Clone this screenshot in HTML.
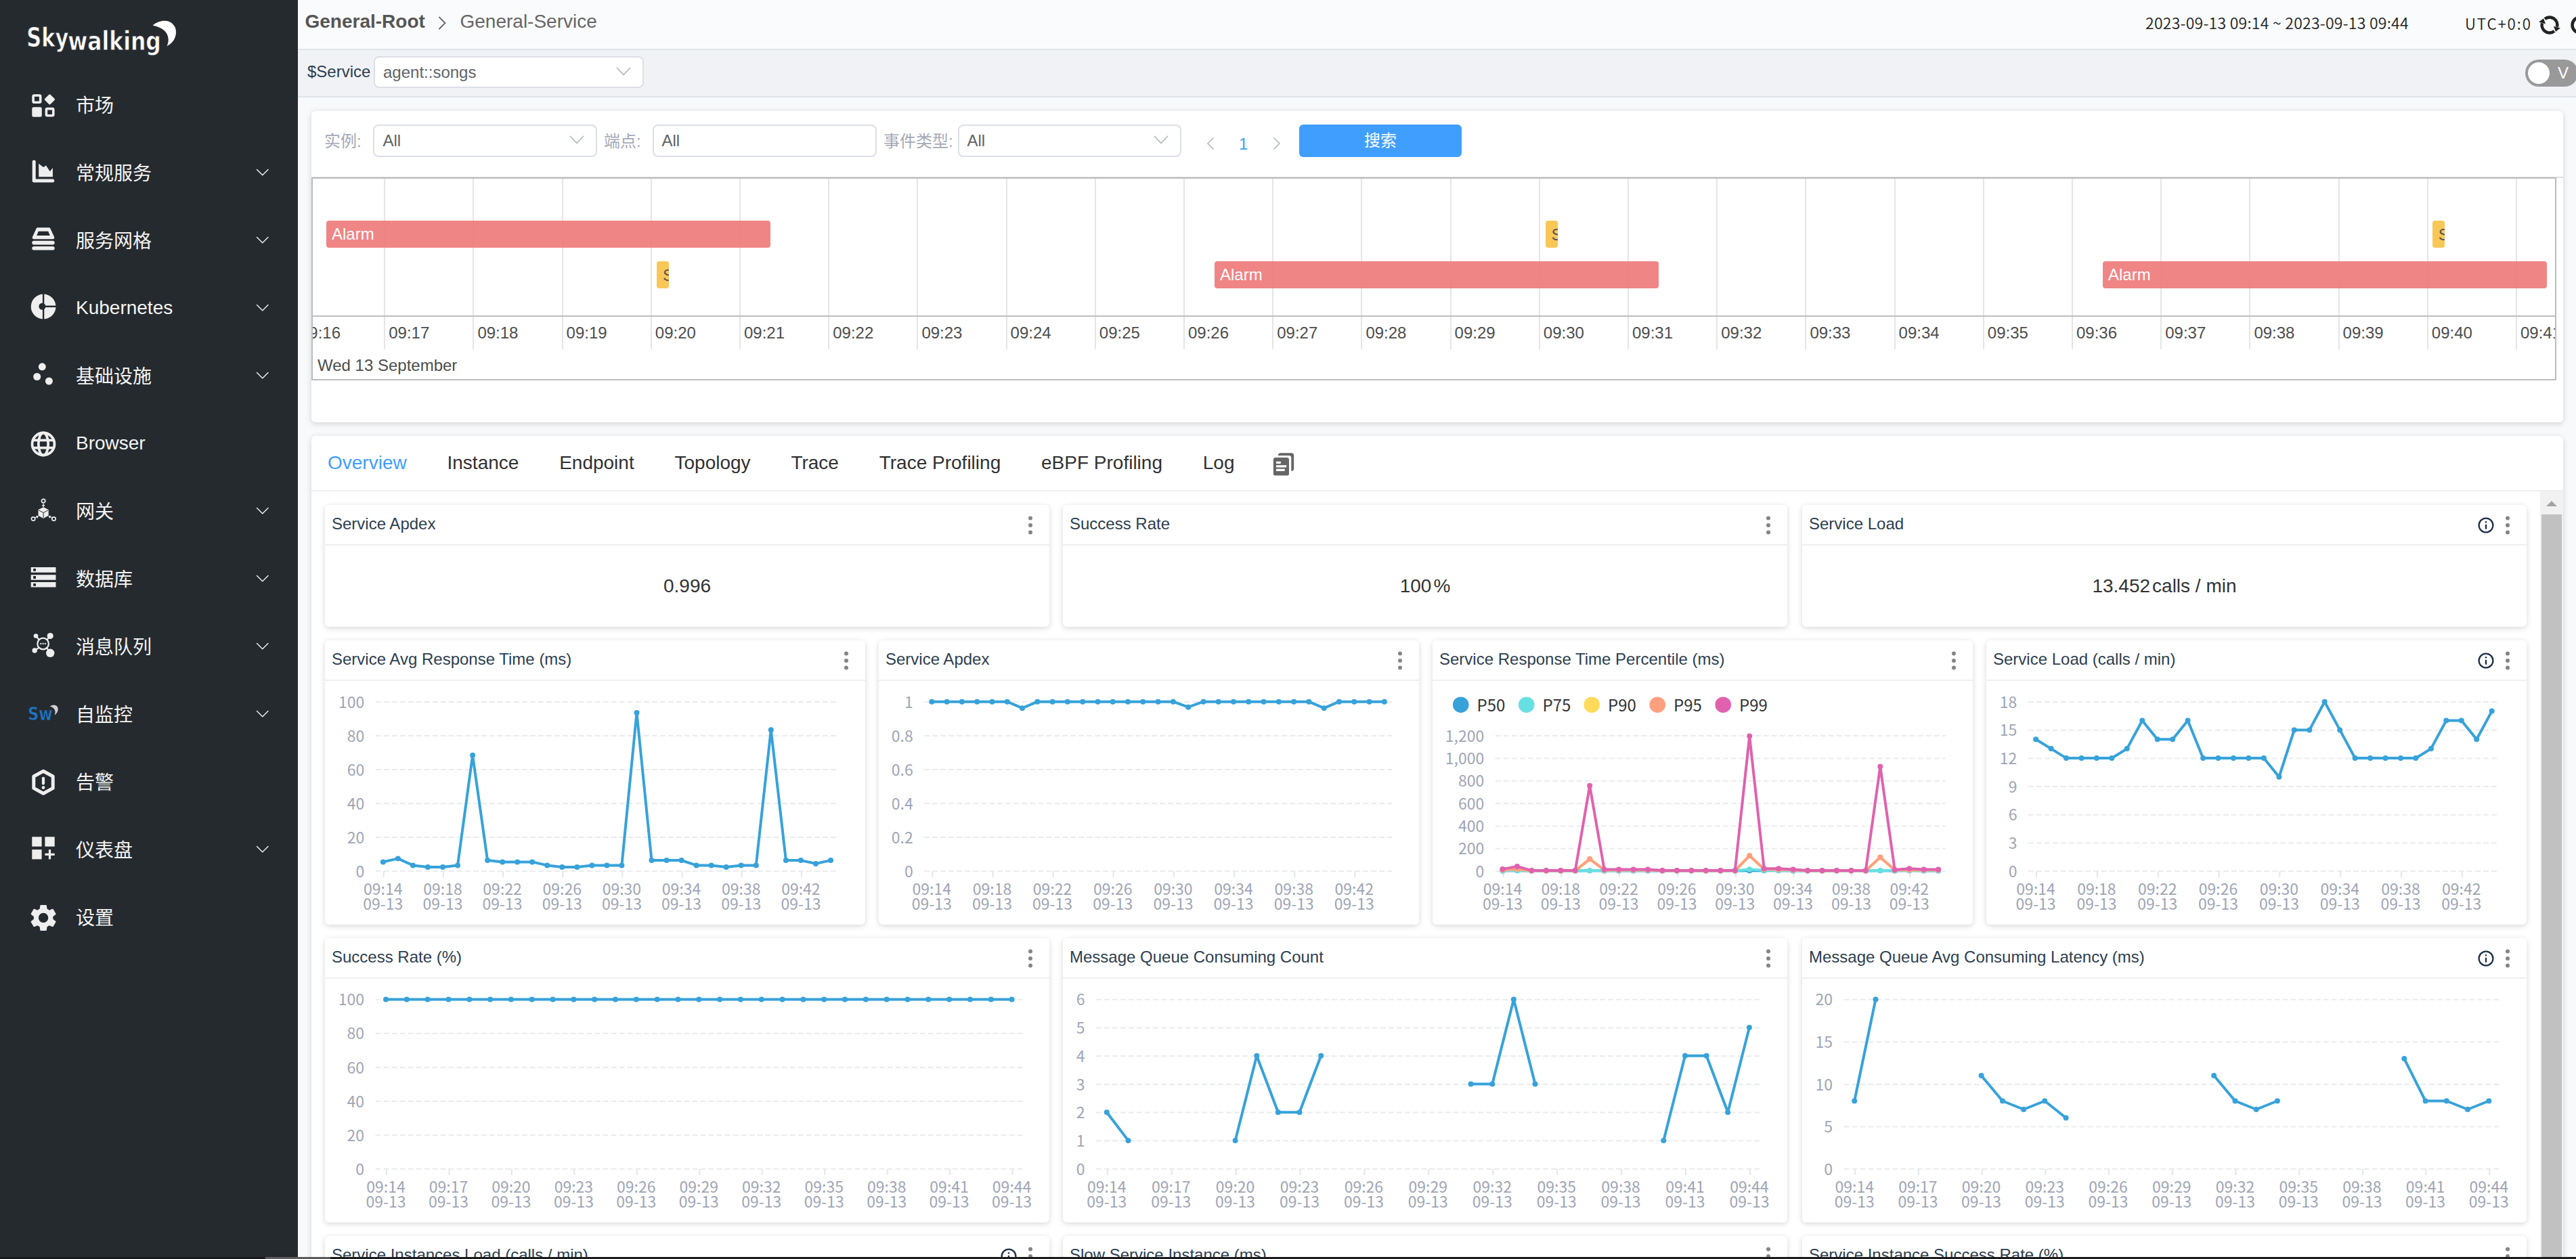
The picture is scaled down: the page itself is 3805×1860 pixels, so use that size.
<!DOCTYPE html><html lang="zh"><head><meta charset="utf-8"><title>SkyWalking</title><style>
*{box-sizing:border-box;margin:0;padding:0}
html,body{width:3805px;height:1860px;overflow:hidden;background:#f7f9fa}
body{font-family:"Liberation Sans","Noto Sans CJK SC",sans-serif;color:#2c3e50;position:relative;-webkit-font-smoothing:antialiased}
.abs{position:absolute}
#side{position:absolute;left:0;top:0;width:440px;height:1860px;background:#252a2f}
.mi{position:absolute;left:0;width:440px;height:100px}
.mi .ic{position:absolute;left:40px;top:26px;width:48px;height:48px}
.mi .tx{position:absolute;left:112px;top:2px;height:100px;line-height:100px;font-size:28px;color:#f4f4f4;white-space:nowrap}
.mi .ar{position:absolute;left:376px;top:38px;width:24px;height:24px}
#top{position:absolute;left:440px;top:0;width:3365px;height:74px;background:#fafbfc;border-bottom:2px solid #dfe4e8}
#tool{position:absolute;left:440px;top:74px;width:3365px;height:70px;background:#f0f2f5;border-bottom:2px solid #dfe4e8}
.card{position:absolute;background:#fff;border-radius:6px;box-shadow:0 2px 8px 0 rgba(0,0,0,.16)}
.sel{position:absolute;height:48px;background:#fff;border:2px solid #dcdfe6;border-radius:8px;font-size:24px;line-height:44px;color:#606266;padding-left:11.5px;white-space:nowrap}
.lab{position:absolute;font-size:24px;line-height:48px;color:#a4a9b6;white-space:nowrap}
.w{position:absolute;background:#fff;border-radius:6px;box-shadow:0 2px 8px 0 rgba(0,0,0,.16);overflow:hidden}
.w .hd{position:absolute;left:0;top:0;right:0;height:60px;border-bottom:2px solid #eee}
.w .tt{position:absolute;left:10px;top:0;line-height:56px;font-size:24px;color:#2c3e50;white-space:nowrap}
.w .val{position:absolute;left:0;right:0;top:60px;bottom:0;display:flex;align-items:center;justify-content:center;font-size:28px;color:#333;white-space:nowrap}
.w svg.ch{position:absolute;left:0;top:0}
.tab{display:inline-block;font-size:28px;margin-right:59.8px;color:#303133;white-space:nowrap}
</style></head><body>
<div id="side">
<svg class="abs" style="left:0;top:0" width="440" height="105" viewBox="0 0 440 105">
<g fill="#fff" stroke="#252a2f" stroke-width="0.800" font-family="DejaVu Sans, sans-serif" font-weight="bold">
<text x="39.300" y="68.600" font-size="38.300" textLength="62" lengthAdjust="spacingAndGlyphs">Sky</text>
<text x="100.300" y="74.100" font-size="39.300" textLength="137.500" lengthAdjust="spacingAndGlyphs">walking</text></g>
<path d="M225.500 37.500 C236 29 252 27.500 258.500 40 C263 51 257 63 246.500 68.300 C252 56 248 42 225.500 37.500 Z" fill="#fff"/>
</svg>
<div class="mi" style="top:105px"><div class="ic"><svg viewBox="0 0 48 48" width="48" height="48"><g fill="none" stroke="#eeeeee" stroke-width="3.600"><rect x="9.100" y="10" width="10.600" height="10.200" rx="1.500"/><rect x="28.400" y="29.600" width="10.400" height="10.200" rx="1.500"/></g><rect x="7.300" y="27.300" width="14.500" height="14.500" rx="2.500" fill="#eeeeee"/><rect x="27.600" y="10.100" width="11.600" height="11.600" rx="1.500" transform="rotate(45 33.400 15.900)" fill="#eeeeee"/></svg></div><div class="tx">市场</div></div>
<div class="mi" style="top:205px"><div class="ic"><svg viewBox="0 0 48 48" width="48" height="48"><path d="M10.200 8 V35.900 H37.700" fill="none" stroke="#eeeeee" stroke-width="5" stroke-linecap="round" stroke-linejoin="round"/><path d="M17.200 10.800 L24.100 15.900 L28 13.600 L33.800 22.300 L37.900 17 V30.200 H17.200 Z" fill="#eeeeee"/></svg></div><div class="tx">常规服务</div><svg class="abs" style="left:378.25px;top:43.9px" width="19.5" height="11.2" viewBox="0 0 19.5 11.2"><path d="M1.5 1.5 L9.75 9.7 L18 1.5" fill="none" stroke="#ececec" stroke-width="1.5" stroke-linecap="round" stroke-linejoin="round"/></svg></div>
<div class="mi" style="top:305px"><div class="ic"><svg viewBox="0 0 48 48" width="48" height="48"><g fill="#eeeeee"><path d="M15.500 5.300 h17 a2 2 0 0 1 1.800 1.200 l5.800 12.500 a2.300 2.300 0 0 1 -2.100 3.300 h-28 a2.300 2.300 0 0 1 -2.100 -3.300 l5.800 -12.500 a2 2 0 0 1 1.800 -1.200 z M16.800 10.800 l-2.600 6.200 h19.600 l-2.600 -6.200 z" fill-rule="evenodd"/><rect x="7.300" y="24.700" width="33.400" height="5.700" rx="2.850"/><rect x="7.300" y="32.900" width="33.400" height="5.600" rx="2.800"/></g></svg></div><div class="tx">服务网格</div><svg class="abs" style="left:378.25px;top:43.9px" width="19.5" height="11.2" viewBox="0 0 19.5 11.2"><path d="M1.5 1.5 L9.75 9.7 L18 1.5" fill="none" stroke="#ececec" stroke-width="1.5" stroke-linecap="round" stroke-linejoin="round"/></svg></div>
<div class="mi" style="top:405px"><div class="ic"><svg viewBox="0 0 48 48" width="48" height="48"><circle cx="24.100" cy="22" r="18.400" fill="#eeeeee"/><g stroke="#252a2f" stroke-width="2.400" fill="none"><path d="M24.100 2 V42 M24.100 21.700 H44"/></g><circle cx="22.400" cy="21.700" r="5" fill="#252a2f"/><rect x="23" y="20.300" width="5" height="2.800" fill="#eeeeee" opacity="0"/></svg></div><div class="tx" style="top:0">Kubernetes</div><svg class="abs" style="left:378.25px;top:43.9px" width="19.5" height="11.2" viewBox="0 0 19.5 11.2"><path d="M1.5 1.5 L9.75 9.7 L18 1.5" fill="none" stroke="#ececec" stroke-width="1.5" stroke-linecap="round" stroke-linejoin="round"/></svg></div>
<div class="mi" style="top:505px"><div class="ic"><svg viewBox="0 0 48 48" width="48" height="48"><g fill="#eeeeee"><circle cx="22.300" cy="10.800" r="5.500"/><circle cx="14.700" cy="25.500" r="5.500"/><circle cx="32.400" cy="32" r="5.500"/></g></svg></div><div class="tx">基础设施</div><svg class="abs" style="left:378.25px;top:43.9px" width="19.5" height="11.2" viewBox="0 0 19.5 11.2"><path d="M1.5 1.5 L9.75 9.7 L18 1.5" fill="none" stroke="#ececec" stroke-width="1.5" stroke-linecap="round" stroke-linejoin="round"/></svg></div>
<div class="mi" style="top:605px"><div class="ic"><svg viewBox="0 0 48 48" width="48" height="48"><g fill="none" stroke="#eeeeee" stroke-width="3.800"><circle cx="24" cy="25" r="16.500"/><ellipse cx="24" cy="25" rx="7.200" ry="16.500"/><path d="M9 19.300 H39 M9 30.700 H39"/></g></svg></div><div class="tx" style="top:0">Browser</div></div>
<div class="mi" style="top:705px"><div class="ic"><svg viewBox="0 0 48 48" width="48" height="48"><path d="M24.100 18.300 l7.600 3.800 v8.600 l-7.600 4.300 -7.600 -4.300 v-8.600 z" fill="#eeeeee"/><path d="M24.100 26.500 v8 M24.100 26.500 l-7 -3.800 M24.100 26.500 l7 -3.800" stroke="#252a2f" stroke-width="1" fill="none"/><g fill="none" stroke="#eeeeee" stroke-width="1.700"><circle cx="24.100" cy="9" r="2.700"/><circle cx="9.100" cy="35.500" r="2.700"/><circle cx="39.500" cy="35.500" r="2.700"/></g><g fill="none" stroke="#eeeeee" stroke-width="1.300"><path d="M24.100 12.500 v4.500 M22.300 15.300 l1.800 1.800 1.800 -1.800 M12 34 l4 -2.200 M13.200 31.600 l2.800 0.200 -0.900 2.600 M36.500 34 l-4 -2.200 M35.300 31.600 l-2.800 0.200 0.900 2.600"/></g></svg></div><div class="tx">网关</div><svg class="abs" style="left:378.25px;top:43.9px" width="19.5" height="11.2" viewBox="0 0 19.5 11.2"><path d="M1.5 1.5 L9.75 9.7 L18 1.5" fill="none" stroke="#ececec" stroke-width="1.5" stroke-linecap="round" stroke-linejoin="round"/></svg></div>
<div class="mi" style="top:805px"><div class="ic"><svg viewBox="0 0 48 48" width="48" height="48"><g fill="#eeeeee" fill-rule="evenodd"><path d="M5.700 7.100 h36.800 v7.600 h-36.800 z M9.100 9 v3.800 h3.900 v-3.800 z"/><path d="M5.700 18.200 h36.800 v7.600 h-36.800 z M9.100 20.100 v3.800 h3.900 v-3.800 z"/><path d="M5.700 29 h36.800 v7.600 h-36.800 z M9.100 30.900 v3.800 h3.900 v-3.800 z"/></g></svg></div><div class="tx">数据库</div><svg class="abs" style="left:378.25px;top:43.9px" width="19.5" height="11.2" viewBox="0 0 19.5 11.2"><path d="M1.5 1.5 L9.75 9.7 L18 1.5" fill="none" stroke="#ececec" stroke-width="1.5" stroke-linecap="round" stroke-linejoin="round"/></svg></div>
<div class="mi" style="top:905px"><div class="ic"><svg viewBox="0 0 48 48" width="48" height="48"><g fill="none" stroke="#eeeeee" stroke-width="2.200"><circle cx="23.600" cy="20" r="8.300"/><path d="M17.600 14 L13 8.500 M29.500 14 L34.200 8.500 M17.300 25.800 L11.200 30 M29.300 26.300 L34.200 33.800"/></g><g fill="#eeeeee"><circle cx="13" cy="8.500" r="3.300"/><circle cx="34.200" cy="8.500" r="4.600"/><circle cx="11.200" cy="30" r="3.700"/><circle cx="34.200" cy="33.800" r="6.200"/><circle cx="20.300" cy="20" r="1.150"/><circle cx="23.600" cy="20" r="1.150"/><circle cx="26.900" cy="20" r="1.150"/></g></svg></div><div class="tx">消息队列</div><svg class="abs" style="left:378.25px;top:43.9px" width="19.5" height="11.2" viewBox="0 0 19.5 11.2"><path d="M1.5 1.5 L9.75 9.7 L18 1.5" fill="none" stroke="#ececec" stroke-width="1.5" stroke-linecap="round" stroke-linejoin="round"/></svg></div>
<div class="mi" style="top:1005px"><div class="ic"><svg viewBox="0 0 48 48" width="48" height="48"><text x="1.300" y="32.500" font-family="DejaVu Sans, sans-serif" font-weight="bold" font-size="26.500" fill="#1d75c4" stroke="#252a2f" stroke-width="0.600" textLength="36.500" lengthAdjust="spacingAndGlyphs">Sw</text><path d="M33.800 12.500 C37 10 42.500 9.500 45 13.500 C47 18 44.500 23 40.500 25.500 C43 20.500 41.500 14.500 33.800 12.500 Z" fill="#d0d0d0"/></svg></div><div class="tx">自监控</div><svg class="abs" style="left:378.25px;top:43.9px" width="19.5" height="11.2" viewBox="0 0 19.5 11.2"><path d="M1.5 1.5 L9.75 9.7 L18 1.5" fill="none" stroke="#ececec" stroke-width="1.5" stroke-linecap="round" stroke-linejoin="round"/></svg></div>
<div class="mi" style="top:1105px"><div class="ic"><svg viewBox="0 0 48 48" width="48" height="48"><path d="M24 8.200 L38.200 16 V33.400 L24 41.200 L9.800 33.400 V16 Z" fill="none" stroke="#eeeeee" stroke-width="5" stroke-linejoin="round"/><rect x="21.900" y="16.800" width="4.200" height="11.800" rx="1.800" fill="#eeeeee"/><circle cx="24" cy="32.600" r="2.400" fill="#eeeeee"/></svg></div><div class="tx">告警</div></div>
<div class="mi" style="top:1205px"><div class="ic"><svg viewBox="0 0 48 48" width="48" height="48"><g fill="#eeeeee"><rect x="7.300" y="5.300" width="14.300" height="14.300"/><rect x="26.400" y="5.300" width="14.300" height="14.300"/><rect x="7.300" y="24.100" width="14.300" height="14.300"/><rect x="31.900" y="24.100" width="3.200" height="14.300"/><rect x="26.400" y="29.700" width="14.300" height="3.200"/></g></svg></div><div class="tx">仪表盘</div><svg class="abs" style="left:378.25px;top:43.9px" width="19.5" height="11.2" viewBox="0 0 19.5 11.2"><path d="M1.5 1.5 L9.75 9.7 L18 1.5" fill="none" stroke="#ececec" stroke-width="1.5" stroke-linecap="round" stroke-linejoin="round"/></svg></div>
<div class="mi" style="top:1305px"><div class="ic"><svg viewBox="0 0 48 48" width="48" height="48"><g transform="translate(0.350 1.250) scale(1.979)"><path fill="#eeeeee" d="M19.140 12.940c.040-.300.060-.610.060-.940 0-.320-.020-.640-.070-.940l2.030-1.580a.490.490 0 0 0 .120-.610l-1.920-3.320a.488.488 0 0 0-.590-.220l-2.390.960c-.500-.380-1.030-.700-1.620-.940l-.360-2.540a.484.484 0 0 0-.480-.410h-3.840c-.240 0-.430.170-.470.410l-.360 2.540c-.590.240-1.130.570-1.620.940l-2.390-.960c-.220-.080-.470 0-.590.220L2.740 8.870c-.120.210-.080.470.120.610l2.030 1.580c-.050.300-.090.630-.090.940s.020.640.070.940l-2.030 1.580a.490.490 0 0 0-.120.610l1.920 3.320c.120.220.370.290.590.220l2.390-.960c.500.380 1.030.700 1.620.940l.360 2.540c.050.240.240.410.480.410h3.840c.240 0 .440-.170.470-.410l.360-2.540c.590-.240 1.130-.560 1.620-.940l2.390.960c.220.080.470 0 .590-.220l1.920-3.320c.120-.220.070-.470-.120-.610l-2.010-1.580zM12 15.600c-1.980 0-3.600-1.620-3.600-3.600s1.620-3.600 3.600-3.600 3.600 1.620 3.600 3.600-1.620 3.600-3.600 3.600z"/></g></svg></div><div class="tx">设置</div></div>
</div>
<div id="top">
<div class="abs" style="left:10.500px;top:0;line-height:64px;font-size:28px;font-weight:bold;color:#555;white-space:nowrap">General-Root</div>
<svg class="abs" style="left:203px;top:21px" width="20" height="26" viewBox="0 0 20 26"><path d="M5.500 4 L14.500 13 L5.500 22" fill="none" stroke="#666" stroke-width="1.800"/></svg>
<div class="abs" style="left:239.500px;top:0;line-height:64px;font-size:28px;color:#666;white-space:nowrap">General-Service</div>
<div class="abs" style="left:2729px;top:0;line-height:67.5px;font-size:23px;font-weight:350;color:#222;white-space:nowrap;font-family:'Noto Sans CJK SC','Liberation Sans',sans-serif;letter-spacing:0.25px">2023-09-13 09:14 ~ 2023-09-13 09:44</div>
<div class="abs" style="left:3201px;top:0;line-height:69px;font-size:22.3px;font-weight:350;letter-spacing:1.9px;color:#222;white-space:nowrap;font-family:'Noto Sans CJK SC','Liberation Sans',sans-serif">UTC+0:0</div>
<svg class="abs" style="left:3308px;top:19px" width="36" height="36" viewBox="0 0 36 36"><g fill="none" stroke="#222" stroke-width="4.500"><path d="M10.98 9.02 A11.40 11.40 0 0 1 29.06 20.76"/><path d="M25.02 26.98 A11.40 11.40 0 0 1 6.94 15.24"/></g><path d="M33.96 22.58 L23.96 19.71 L27.03 27.87 Z M2.04 13.42 L12.04 16.29 L8.97 8.13 Z" fill="#222"/></svg>
<svg class="abs" style="left:3355px;top:17px" width="16" height="40" viewBox="0 0 16 40"><circle cx="16" cy="20" r="11.500" fill="none" stroke="#222" stroke-width="4.500"/></svg>
</div>
<div id="tool">
<div class="abs" style="left:14px;top:0;line-height:64px;font-size:24px;color:#2c3e50;white-space:nowrap">$Service</div>
<div class="sel" style="left:111.500px;top:8.500px;width:399px;height:47px;line-height:43px;color:#606266;padding-left:12.500px">agent::songs</div>
<svg class="abs" style="left:470px;top:25px" width="22" height="13" viewBox="0 0 22 13"><path d="M1.5 1.5 L11 11.5 L20.5 1.5" fill="none" stroke="#b3b7bf" stroke-width="1.8" stroke-linecap="round" stroke-linejoin="round"/></svg>
<div class="abs" style="left:3290px;top:14px;width:78px;height:40px;border-radius:20px;background:#999"><div class="abs" style="left:4px;top:4px;width:32px;height:32px;border-radius:16px;background:#fff"></div><div class="abs" style="left:48px;top:0;line-height:40px;font-size:24px;color:#fff">V</div></div>
</div>
<div class="card" style="left:460px;top:164px;width:3326px;height:460px">
<div class="lab" style="left:19px;top:21px">实例:</div>
<div class="sel" style="left:91px;top:20px;width:331px;padding-left:12.500px">All</div>
<svg class="abs" style="left:380.5px;top:36px" width="22" height="13" viewBox="0 0 22 13"><path d="M1.5 1.5 L11 11.5 L20.5 1.5" fill="none" stroke="#b3b7bf" stroke-width="1.8" stroke-linecap="round" stroke-linejoin="round"/></svg>
<div class="lab" style="left:432px;top:21px">端点:</div>
<div class="sel" style="left:504px;top:20px;width:331px">All</div>
<div class="lab" style="left:845px;top:21px">事件类型:</div>
<div class="sel" style="left:955px;top:20px;width:330px">All</div>
<svg class="abs" style="left:1243.5px;top:36px" width="22" height="13" viewBox="0 0 22 13"><path d="M1.5 1.5 L11 11.5 L20.5 1.5" fill="none" stroke="#b3b7bf" stroke-width="1.8" stroke-linecap="round" stroke-linejoin="round"/></svg>
<svg class="abs" style="left:1320px;top:34px" width="16" height="26" viewBox="0 0 16 26"><path d="M12.500 5.500 L4 14 L12.500 22.500" fill="none" stroke="#b6bac2" stroke-width="1.700"/></svg>
<div class="abs" style="left:1370px;top:25px;font-size:24px;line-height:48px;color:#409eff">1</div>
<svg class="abs" style="left:1417px;top:34px" width="16" height="26" viewBox="0 0 16 26"><path d="M4.500 5.500 L13 14 L4.500 22.500" fill="none" stroke="#b6bac2" stroke-width="1.700"/></svg>
<div class="abs" style="left:1459px;top:20px;width:240px;height:48px;border-radius:6px;background:#409eff;color:#fff;font-size:24px;line-height:48px;text-align:center">搜索</div>
<div class="abs" style="left:0;top:96.500px;width:3326px;height:2px;background:#dcdee1"></div>
<div class="abs" style="left:0px;top:98px;width:3315.5px;height:300px;border:2px solid #bcbcbc;overflow:hidden">
<div class="abs" style="left:-26.0px;top:0;width:2px;height:252px;background:#e5e5e5"></div>
<div class="abs" style="left:-19.0px;top:204px;font-size:24px;line-height:48px;color:#4d4d4d;white-space:nowrap">09:16</div>
<div class="abs" style="left:105.2px;top:0;width:2px;height:252px;background:#e5e5e5"></div>
<div class="abs" style="left:112.2px;top:204px;font-size:24px;line-height:48px;color:#4d4d4d;white-space:nowrap">09:17</div>
<div class="abs" style="left:236.4px;top:0;width:2px;height:252px;background:#e5e5e5"></div>
<div class="abs" style="left:243.4px;top:204px;font-size:24px;line-height:48px;color:#4d4d4d;white-space:nowrap">09:18</div>
<div class="abs" style="left:367.6px;top:0;width:2px;height:252px;background:#e5e5e5"></div>
<div class="abs" style="left:374.6px;top:204px;font-size:24px;line-height:48px;color:#4d4d4d;white-space:nowrap">09:19</div>
<div class="abs" style="left:498.8px;top:0;width:2px;height:252px;background:#e5e5e5"></div>
<div class="abs" style="left:505.8px;top:204px;font-size:24px;line-height:48px;color:#4d4d4d;white-space:nowrap">09:20</div>
<div class="abs" style="left:630.0px;top:0;width:2px;height:252px;background:#e5e5e5"></div>
<div class="abs" style="left:637.0px;top:204px;font-size:24px;line-height:48px;color:#4d4d4d;white-space:nowrap">09:21</div>
<div class="abs" style="left:761.2px;top:0;width:2px;height:252px;background:#e5e5e5"></div>
<div class="abs" style="left:768.2px;top:204px;font-size:24px;line-height:48px;color:#4d4d4d;white-space:nowrap">09:22</div>
<div class="abs" style="left:892.4px;top:0;width:2px;height:252px;background:#e5e5e5"></div>
<div class="abs" style="left:899.4px;top:204px;font-size:24px;line-height:48px;color:#4d4d4d;white-space:nowrap">09:23</div>
<div class="abs" style="left:1023.6px;top:0;width:2px;height:252px;background:#e5e5e5"></div>
<div class="abs" style="left:1030.6px;top:204px;font-size:24px;line-height:48px;color:#4d4d4d;white-space:nowrap">09:24</div>
<div class="abs" style="left:1154.8px;top:0;width:2px;height:252px;background:#e5e5e5"></div>
<div class="abs" style="left:1161.8px;top:204px;font-size:24px;line-height:48px;color:#4d4d4d;white-space:nowrap">09:25</div>
<div class="abs" style="left:1286.0px;top:0;width:2px;height:252px;background:#e5e5e5"></div>
<div class="abs" style="left:1293.0px;top:204px;font-size:24px;line-height:48px;color:#4d4d4d;white-space:nowrap">09:26</div>
<div class="abs" style="left:1417.2px;top:0;width:2px;height:252px;background:#e5e5e5"></div>
<div class="abs" style="left:1424.2px;top:204px;font-size:24px;line-height:48px;color:#4d4d4d;white-space:nowrap">09:27</div>
<div class="abs" style="left:1548.4px;top:0;width:2px;height:252px;background:#e5e5e5"></div>
<div class="abs" style="left:1555.4px;top:204px;font-size:24px;line-height:48px;color:#4d4d4d;white-space:nowrap">09:28</div>
<div class="abs" style="left:1679.6px;top:0;width:2px;height:252px;background:#e5e5e5"></div>
<div class="abs" style="left:1686.6px;top:204px;font-size:24px;line-height:48px;color:#4d4d4d;white-space:nowrap">09:29</div>
<div class="abs" style="left:1810.8px;top:0;width:2px;height:252px;background:#e5e5e5"></div>
<div class="abs" style="left:1817.8px;top:204px;font-size:24px;line-height:48px;color:#4d4d4d;white-space:nowrap">09:30</div>
<div class="abs" style="left:1942.0px;top:0;width:2px;height:252px;background:#e5e5e5"></div>
<div class="abs" style="left:1949.0px;top:204px;font-size:24px;line-height:48px;color:#4d4d4d;white-space:nowrap">09:31</div>
<div class="abs" style="left:2073.2px;top:0;width:2px;height:252px;background:#e5e5e5"></div>
<div class="abs" style="left:2080.2px;top:204px;font-size:24px;line-height:48px;color:#4d4d4d;white-space:nowrap">09:32</div>
<div class="abs" style="left:2204.4px;top:0;width:2px;height:252px;background:#e5e5e5"></div>
<div class="abs" style="left:2211.4px;top:204px;font-size:24px;line-height:48px;color:#4d4d4d;white-space:nowrap">09:33</div>
<div class="abs" style="left:2335.6px;top:0;width:2px;height:252px;background:#e5e5e5"></div>
<div class="abs" style="left:2342.6px;top:204px;font-size:24px;line-height:48px;color:#4d4d4d;white-space:nowrap">09:34</div>
<div class="abs" style="left:2466.8px;top:0;width:2px;height:252px;background:#e5e5e5"></div>
<div class="abs" style="left:2473.8px;top:204px;font-size:24px;line-height:48px;color:#4d4d4d;white-space:nowrap">09:35</div>
<div class="abs" style="left:2598.0px;top:0;width:2px;height:252px;background:#e5e5e5"></div>
<div class="abs" style="left:2605.0px;top:204px;font-size:24px;line-height:48px;color:#4d4d4d;white-space:nowrap">09:36</div>
<div class="abs" style="left:2729.2px;top:0;width:2px;height:252px;background:#e5e5e5"></div>
<div class="abs" style="left:2736.2px;top:204px;font-size:24px;line-height:48px;color:#4d4d4d;white-space:nowrap">09:37</div>
<div class="abs" style="left:2860.4px;top:0;width:2px;height:252px;background:#e5e5e5"></div>
<div class="abs" style="left:2867.4px;top:204px;font-size:24px;line-height:48px;color:#4d4d4d;white-space:nowrap">09:38</div>
<div class="abs" style="left:2991.6px;top:0;width:2px;height:252px;background:#e5e5e5"></div>
<div class="abs" style="left:2998.6px;top:204px;font-size:24px;line-height:48px;color:#4d4d4d;white-space:nowrap">09:39</div>
<div class="abs" style="left:3122.8px;top:0;width:2px;height:252px;background:#e5e5e5"></div>
<div class="abs" style="left:3129.8px;top:204px;font-size:24px;line-height:48px;color:#4d4d4d;white-space:nowrap">09:40</div>
<div class="abs" style="left:3254.0px;top:0;width:2px;height:252px;background:#e5e5e5"></div>
<div class="abs" style="left:3261.0px;top:204px;font-size:24px;line-height:48px;color:#4d4d4d;white-space:nowrap">09:41</div>
<div class="abs" style="left:3385.2px;top:0;width:2px;height:252px;background:#e5e5e5"></div>
<div class="abs" style="left:3392.2px;top:204px;font-size:24px;line-height:48px;color:#4d4d4d;white-space:nowrap">09:42</div>
<div class="abs" style="left:0;top:202px;width:100%;height:2px;background:#bfbfbf"></div>
<div class="abs" style="left:7px;top:254px;font-size:24px;line-height:44px;color:#4d4d4d;white-space:nowrap">Wed 13 September</div>
<div class="abs" style="left:20.0px;top:62px;width:656.0px;height:40px;border-radius:4px;background:rgba(238,120,120,.9);color:#fff;font-size:24px;line-height:40px;padding-left:8px">Alarm</div>
<div class="abs" style="left:1332.0px;top:122px;width:656.0px;height:40px;border-radius:4px;background:rgba(238,120,120,.9);color:#fff;font-size:24px;line-height:40px;padding-left:8px">Alarm</div>
<div class="abs" style="left:2644.0px;top:122px;width:656.0px;height:40px;border-radius:4px;background:rgba(238,120,120,.9);color:#fff;font-size:24px;line-height:40px;padding-left:8px">Alarm</div>
<div class="abs" style="left:508.0px;top:122px;width:18px;height:40px;border-radius:4px;background:#f9c756;color:#555;font-size:24px;line-height:41px;padding-left:9px;overflow:hidden">S</div>
<div class="abs" style="left:1820.5px;top:62px;width:18px;height:40px;border-radius:4px;background:#f9c756;color:#555;font-size:24px;line-height:41px;padding-left:9px;overflow:hidden">S</div>
<div class="abs" style="left:3130.7px;top:62px;width:18px;height:40px;border-radius:4px;background:#f9c756;color:#555;font-size:24px;line-height:41px;padding-left:9px;overflow:hidden">S</div>
</div>
</div>
<div class="card" style="left:460px;top:644px;width:3326px;height:1300px;overflow:hidden">
<div class="abs" style="left:0;top:0;width:100%;height:82px;border-bottom:2px solid #eee"></div>
<div class="abs" style="left:24px;top:0;line-height:80px;white-space:nowrap"><span class="tab" style="color:#409eff">Overview</span><span class="tab">Instance</span><span class="tab">Endpoint</span><span class="tab">Topology</span><span class="tab">Trace</span><span class="tab">Trace Profiling</span><span class="tab">eBPF Profiling</span><span class="tab">Log</span></div>
<svg class="abs" style="left:1420px;top:24px" width="34" height="36" viewBox="0 0 34 36"><path d="M7.800 5.100 Q7.800 1.200 11.700 1.200 H27.300 a3.900 3.900 0 0 1 3.900 3.900 V24 a3.900 3.900 0 0 1 -3.900 3.900 V8.500 a3.400 3.400 0 0 0 -3.400 -3.400 H7.800 Z" fill="#666"/><rect x="0.900" y="8.100" width="23.100" height="26.500" rx="3.200" fill="#666"/><g fill="#fff"><rect x="4.900" y="13.700" width="7.100" height="3.200" rx="0.800"/><rect x="4.900" y="19.200" width="15.400" height="3.200" rx="0.800"/><rect x="4.900" y="24.800" width="12.900" height="3.200" rx="0.800"/></g></svg>
<div class="abs" style="left:3292px;top:82px;width:34px;height:1300px;background:#f1f1f1"></div>
<div class="abs" style="left:3294px;top:116px;width:30px;height:1300px;background:#c1c1c1"></div>
<svg class="abs" style="left:3299px;top:94px" width="20" height="12" viewBox="0 0 20 12"><path d="M2 10 L10 2 L18 10 Z" fill="#a3a3a3"/></svg>
</div>
<div class="w" style="left:480.00px;top:746px;width:1070.00px;height:180px"><div class="hd"></div><div class="tt">Service Apdex</div><svg class="abs" style="left:1037.5px;top:16px" width="8" height="30" viewBox="0 0 8 30"><g fill="#858585"><circle cx="4" cy="3.500" r="3"/><circle cx="4" cy="14.100" r="3"/><circle cx="4" cy="24.600" r="3"/></g></svg><div class="val">0.996</div></div>
<div class="w" style="left:1570.00px;top:746px;width:1070.00px;height:180px"><div class="hd"></div><div class="tt">Success Rate</div><svg class="abs" style="left:1037.5px;top:16px" width="8" height="30" viewBox="0 0 8 30"><g fill="#858585"><circle cx="4" cy="3.500" r="3"/><circle cx="4" cy="14.100" r="3"/><circle cx="4" cy="24.600" r="3"/></g></svg><div class="val">100<span style="margin-left:3px">%</span></div></div>
<div class="w" style="left:2662.00px;top:746px;width:1070.00px;height:180px"><div class="hd"></div><div class="tt">Service Load</div><svg class="abs" style="left:1037.5px;top:16px" width="8" height="30" viewBox="0 0 8 30"><g fill="#858585"><circle cx="4" cy="3.500" r="3"/><circle cx="4" cy="14.100" r="3"/><circle cx="4" cy="24.600" r="3"/></g></svg><svg class="abs" style="left:996.5px;top:17px" width="26" height="26" viewBox="0 0 26 26"><circle cx="13" cy="13" r="10.400" fill="none" stroke="#1e3048" stroke-width="2.300"/><rect x="11.800" y="11.800" width="2.400" height="6.900" fill="#1e3048"/><circle cx="13" cy="8.200" r="1.300" fill="#1e3048"/></svg><div class="val">13.452<span style="margin-left:3px">calls / min</span></div></div>
<div class="w" style="left:480.00px;top:946px;width:798.00px;height:420px"><div class="hd"></div><div class="tt">Service Avg Response Time (ms)</div><svg class="abs" style="left:765.5px;top:16px" width="8" height="30" viewBox="0 0 8 30"><g fill="#858585"><circle cx="4" cy="3.500" r="3"/><circle cx="4" cy="14.100" r="3"/><circle cx="4" cy="24.600" r="3"/></g></svg><svg class="ch" width="798.00" height="420" viewBox="0 0 798.00 420" font-family="Noto Sans CJK SC, Liberation Sans, sans-serif" font-size="23"><line x1="74.8" x2="758.0" y1="341.0" y2="341.0" stroke="#e9ebed" stroke-width="2" stroke-dasharray="8 4"/><line x1="74.8" x2="758.0" y1="291.0" y2="291.0" stroke="#e9ebed" stroke-width="2" stroke-dasharray="8 4"/><line x1="74.8" x2="758.0" y1="241.0" y2="241.0" stroke="#e9ebed" stroke-width="2" stroke-dasharray="8 4"/><line x1="74.8" x2="758.0" y1="191.1" y2="191.1" stroke="#e9ebed" stroke-width="2" stroke-dasharray="8 4"/><line x1="74.8" x2="758.0" y1="141.1" y2="141.1" stroke="#e9ebed" stroke-width="2" stroke-dasharray="8 4"/><line x1="74.8" x2="758.0" y1="91.1" y2="91.1" stroke="#e9ebed" stroke-width="2" stroke-dasharray="8 4"/><text x="58.3" y="349.6" text-anchor="end" fill="#9ea5b6">0</text><text x="58.3" y="299.6" text-anchor="end" fill="#9ea5b6">20</text><text x="58.3" y="249.6" text-anchor="end" fill="#9ea5b6">40</text><text x="58.3" y="199.7" text-anchor="end" fill="#9ea5b6">60</text><text x="58.3" y="149.7" text-anchor="end" fill="#9ea5b6">80</text><text x="58.3" y="99.7" text-anchor="end" fill="#9ea5b6">100</text><line x1="86.8" x2="86.8" y1="341.0" y2="350.0" stroke="#e3e6eb" stroke-width="2"/><text x="85.8" y="375.6" text-anchor="middle" fill="#9ea5b6">09:14</text><text x="85.8" y="398.1" text-anchor="middle" fill="#9ea5b6">09-13</text><line x1="175.0" x2="175.0" y1="341.0" y2="350.0" stroke="#e3e6eb" stroke-width="2"/><text x="174.0" y="375.6" text-anchor="middle" fill="#9ea5b6">09:18</text><text x="174.0" y="398.1" text-anchor="middle" fill="#9ea5b6">09-13</text><line x1="263.1" x2="263.1" y1="341.0" y2="350.0" stroke="#e3e6eb" stroke-width="2"/><text x="262.1" y="375.6" text-anchor="middle" fill="#9ea5b6">09:22</text><text x="262.1" y="398.1" text-anchor="middle" fill="#9ea5b6">09-13</text><line x1="351.3" x2="351.3" y1="341.0" y2="350.0" stroke="#e3e6eb" stroke-width="2"/><text x="350.3" y="375.6" text-anchor="middle" fill="#9ea5b6">09:26</text><text x="350.3" y="398.1" text-anchor="middle" fill="#9ea5b6">09-13</text><line x1="439.4" x2="439.4" y1="341.0" y2="350.0" stroke="#e3e6eb" stroke-width="2"/><text x="438.4" y="375.6" text-anchor="middle" fill="#9ea5b6">09:30</text><text x="438.4" y="398.1" text-anchor="middle" fill="#9ea5b6">09-13</text><line x1="527.6" x2="527.6" y1="341.0" y2="350.0" stroke="#e3e6eb" stroke-width="2"/><text x="526.6" y="375.6" text-anchor="middle" fill="#9ea5b6">09:34</text><text x="526.6" y="398.1" text-anchor="middle" fill="#9ea5b6">09-13</text><line x1="615.7" x2="615.7" y1="341.0" y2="350.0" stroke="#e3e6eb" stroke-width="2"/><text x="614.7" y="375.6" text-anchor="middle" fill="#9ea5b6">09:38</text><text x="614.7" y="398.1" text-anchor="middle" fill="#9ea5b6">09-13</text><line x1="703.9" x2="703.9" y1="341.0" y2="350.0" stroke="#e3e6eb" stroke-width="2"/><text x="702.9" y="375.6" text-anchor="middle" fill="#9ea5b6">09:42</text><text x="702.9" y="398.1" text-anchor="middle" fill="#9ea5b6">09-13</text><polyline fill="none" stroke="#37a2da" stroke-width="4" stroke-linejoin="round" stroke-linecap="round" points="85.8,327.4 107.9,322.4 129.9,332.4 151.9,335.1 174.0,335.1 196.0,332.4 218.1,169.7 240.1,325.1 262.1,327.4 284.2,327.4 306.2,327.4 328.2,332.4 350.3,335.1 372.3,335.1 394.4,332.4 416.4,332.4 438.4,332.4 460.5,106.9 482.5,325.1 504.6,325.1 526.6,325.1 548.6,332.4 570.7,332.4 592.7,335.1 614.7,332.4 636.8,332.4 658.8,132.2 680.9,325.1 702.9,325.1 724.9,329.9 747.0,325.1"/><g fill="#37a2da"><circle cx="85.8" cy="327.4" r="4"/><circle cx="107.9" cy="322.4" r="4"/><circle cx="129.9" cy="332.4" r="4"/><circle cx="151.9" cy="335.1" r="4"/><circle cx="174.0" cy="335.1" r="4"/><circle cx="196.0" cy="332.4" r="4"/><circle cx="218.1" cy="169.7" r="4"/><circle cx="240.1" cy="325.1" r="4"/><circle cx="262.1" cy="327.4" r="4"/><circle cx="284.2" cy="327.4" r="4"/><circle cx="306.2" cy="327.4" r="4"/><circle cx="328.2" cy="332.4" r="4"/><circle cx="350.3" cy="335.1" r="4"/><circle cx="372.3" cy="335.1" r="4"/><circle cx="394.4" cy="332.4" r="4"/><circle cx="416.4" cy="332.4" r="4"/><circle cx="438.4" cy="332.4" r="4"/><circle cx="460.5" cy="106.9" r="4"/><circle cx="482.5" cy="325.1" r="4"/><circle cx="504.6" cy="325.1" r="4"/><circle cx="526.6" cy="325.1" r="4"/><circle cx="548.6" cy="332.4" r="4"/><circle cx="570.7" cy="332.4" r="4"/><circle cx="592.7" cy="335.1" r="4"/><circle cx="614.7" cy="332.4" r="4"/><circle cx="636.8" cy="332.4" r="4"/><circle cx="658.8" cy="132.2" r="4"/><circle cx="680.9" cy="325.1" r="4"/><circle cx="702.9" cy="325.1" r="4"/><circle cx="724.9" cy="329.9" r="4"/><circle cx="747.0" cy="325.1" r="4"/></g></svg></div>
<div class="w" style="left:1298.00px;top:946px;width:798.00px;height:420px"><div class="hd"></div><div class="tt">Service Apdex</div><svg class="abs" style="left:765.5px;top:16px" width="8" height="30" viewBox="0 0 8 30"><g fill="#858585"><circle cx="4" cy="3.500" r="3"/><circle cx="4" cy="14.100" r="3"/><circle cx="4" cy="24.600" r="3"/></g></svg><svg class="ch" width="798.00" height="420" viewBox="0 0 798.00 420" font-family="Noto Sans CJK SC, Liberation Sans, sans-serif" font-size="23"><line x1="67.2" x2="758.0" y1="341.0" y2="341.0" stroke="#e9ebed" stroke-width="2" stroke-dasharray="8 4"/><line x1="67.2" x2="758.0" y1="291.0" y2="291.0" stroke="#e9ebed" stroke-width="2" stroke-dasharray="8 4"/><line x1="67.2" x2="758.0" y1="241.0" y2="241.0" stroke="#e9ebed" stroke-width="2" stroke-dasharray="8 4"/><line x1="67.2" x2="758.0" y1="191.1" y2="191.1" stroke="#e9ebed" stroke-width="2" stroke-dasharray="8 4"/><line x1="67.2" x2="758.0" y1="141.1" y2="141.1" stroke="#e9ebed" stroke-width="2" stroke-dasharray="8 4"/><line x1="67.2" x2="758.0" y1="91.1" y2="91.1" stroke="#e9ebed" stroke-width="2" stroke-dasharray="8 4"/><text x="50.7" y="349.6" text-anchor="end" fill="#9ea5b6">0</text><text x="50.7" y="299.6" text-anchor="end" fill="#9ea5b6">0.2</text><text x="50.7" y="249.6" text-anchor="end" fill="#9ea5b6">0.4</text><text x="50.7" y="199.7" text-anchor="end" fill="#9ea5b6">0.6</text><text x="50.7" y="149.7" text-anchor="end" fill="#9ea5b6">0.8</text><text x="50.7" y="99.7" text-anchor="end" fill="#9ea5b6">1</text><line x1="79.3" x2="79.3" y1="341.0" y2="350.0" stroke="#e3e6eb" stroke-width="2"/><text x="78.3" y="375.6" text-anchor="middle" fill="#9ea5b6">09:14</text><text x="78.3" y="398.1" text-anchor="middle" fill="#9ea5b6">09-13</text><line x1="168.5" x2="168.5" y1="341.0" y2="350.0" stroke="#e3e6eb" stroke-width="2"/><text x="167.5" y="375.6" text-anchor="middle" fill="#9ea5b6">09:18</text><text x="167.5" y="398.1" text-anchor="middle" fill="#9ea5b6">09-13</text><line x1="257.6" x2="257.6" y1="341.0" y2="350.0" stroke="#e3e6eb" stroke-width="2"/><text x="256.6" y="375.6" text-anchor="middle" fill="#9ea5b6">09:22</text><text x="256.6" y="398.1" text-anchor="middle" fill="#9ea5b6">09-13</text><line x1="346.7" x2="346.7" y1="341.0" y2="350.0" stroke="#e3e6eb" stroke-width="2"/><text x="345.7" y="375.6" text-anchor="middle" fill="#9ea5b6">09:26</text><text x="345.7" y="398.1" text-anchor="middle" fill="#9ea5b6">09-13</text><line x1="435.9" x2="435.9" y1="341.0" y2="350.0" stroke="#e3e6eb" stroke-width="2"/><text x="434.9" y="375.6" text-anchor="middle" fill="#9ea5b6">09:30</text><text x="434.9" y="398.1" text-anchor="middle" fill="#9ea5b6">09-13</text><line x1="525.0" x2="525.0" y1="341.0" y2="350.0" stroke="#e3e6eb" stroke-width="2"/><text x="524.0" y="375.6" text-anchor="middle" fill="#9ea5b6">09:34</text><text x="524.0" y="398.1" text-anchor="middle" fill="#9ea5b6">09-13</text><line x1="614.2" x2="614.2" y1="341.0" y2="350.0" stroke="#e3e6eb" stroke-width="2"/><text x="613.2" y="375.6" text-anchor="middle" fill="#9ea5b6">09:38</text><text x="613.2" y="398.1" text-anchor="middle" fill="#9ea5b6">09-13</text><line x1="703.3" x2="703.3" y1="341.0" y2="350.0" stroke="#e3e6eb" stroke-width="2"/><text x="702.3" y="375.6" text-anchor="middle" fill="#9ea5b6">09:42</text><text x="702.3" y="398.1" text-anchor="middle" fill="#9ea5b6">09-13</text><polyline fill="none" stroke="#37a2da" stroke-width="4" stroke-linejoin="round" stroke-linecap="round" points="78.3,90.7 100.6,90.7 122.9,90.7 145.2,90.7 167.5,90.7 189.8,90.7 212.0,100.2 234.3,90.7 256.6,90.7 278.9,90.7 301.2,90.7 323.5,90.7 345.7,90.7 368.0,90.7 390.3,90.7 412.6,90.7 434.9,90.7 457.2,98.7 479.5,90.7 501.7,90.7 524.0,90.7 546.3,90.7 568.6,90.7 590.9,90.7 613.2,90.7 635.4,90.7 657.7,100.2 680.0,90.7 702.3,90.7 724.6,90.7 746.9,90.7"/><g fill="#37a2da"><circle cx="78.3" cy="90.7" r="4"/><circle cx="100.6" cy="90.7" r="4"/><circle cx="122.9" cy="90.7" r="4"/><circle cx="145.2" cy="90.7" r="4"/><circle cx="167.5" cy="90.7" r="4"/><circle cx="189.8" cy="90.7" r="4"/><circle cx="212.0" cy="100.2" r="4"/><circle cx="234.3" cy="90.7" r="4"/><circle cx="256.6" cy="90.7" r="4"/><circle cx="278.9" cy="90.7" r="4"/><circle cx="301.2" cy="90.7" r="4"/><circle cx="323.5" cy="90.7" r="4"/><circle cx="345.7" cy="90.7" r="4"/><circle cx="368.0" cy="90.7" r="4"/><circle cx="390.3" cy="90.7" r="4"/><circle cx="412.6" cy="90.7" r="4"/><circle cx="434.9" cy="90.7" r="4"/><circle cx="457.2" cy="98.7" r="4"/><circle cx="479.5" cy="90.7" r="4"/><circle cx="501.7" cy="90.7" r="4"/><circle cx="524.0" cy="90.7" r="4"/><circle cx="546.3" cy="90.7" r="4"/><circle cx="568.6" cy="90.7" r="4"/><circle cx="590.9" cy="90.7" r="4"/><circle cx="613.2" cy="90.7" r="4"/><circle cx="635.4" cy="90.7" r="4"/><circle cx="657.7" cy="100.2" r="4"/><circle cx="680.0" cy="90.7" r="4"/><circle cx="702.3" cy="90.7" r="4"/><circle cx="724.6" cy="90.7" r="4"/><circle cx="746.9" cy="90.7" r="4"/></g></svg></div>
<div class="w" style="left:2116.00px;top:946px;width:798.00px;height:420px"><div class="hd"></div><div class="tt">Service Response Time Percentile (ms)</div><svg class="abs" style="left:765.5px;top:16px" width="8" height="30" viewBox="0 0 8 30"><g fill="#858585"><circle cx="4" cy="3.500" r="3"/><circle cx="4" cy="14.100" r="3"/><circle cx="4" cy="24.600" r="3"/></g></svg><svg class="ch" width="798.00" height="420" viewBox="0 0 798.00 420" font-family="Noto Sans CJK SC, Liberation Sans, sans-serif" font-size="23"><line x1="92.8" x2="757.8" y1="341.0" y2="341.0" stroke="#e9ebed" stroke-width="2" stroke-dasharray="8 4"/><line x1="92.8" x2="757.8" y1="307.7" y2="307.7" stroke="#e9ebed" stroke-width="2" stroke-dasharray="8 4"/><line x1="92.8" x2="757.8" y1="274.4" y2="274.4" stroke="#e9ebed" stroke-width="2" stroke-dasharray="8 4"/><line x1="92.8" x2="757.8" y1="241.0" y2="241.0" stroke="#e9ebed" stroke-width="2" stroke-dasharray="8 4"/><line x1="92.8" x2="757.8" y1="207.7" y2="207.7" stroke="#e9ebed" stroke-width="2" stroke-dasharray="8 4"/><line x1="92.8" x2="757.8" y1="174.4" y2="174.4" stroke="#e9ebed" stroke-width="2" stroke-dasharray="8 4"/><line x1="92.8" x2="757.8" y1="141.1" y2="141.1" stroke="#e9ebed" stroke-width="2" stroke-dasharray="8 4"/><text x="76.3" y="349.6" text-anchor="end" fill="#9ea5b6">0</text><text x="76.3" y="316.3" text-anchor="end" fill="#9ea5b6">200</text><text x="76.3" y="283.0" text-anchor="end" fill="#9ea5b6">400</text><text x="76.3" y="249.6" text-anchor="end" fill="#9ea5b6">600</text><text x="76.3" y="216.3" text-anchor="end" fill="#9ea5b6">800</text><text x="76.3" y="183.0" text-anchor="end" fill="#9ea5b6">1,000</text><text x="76.3" y="149.7" text-anchor="end" fill="#9ea5b6">1,200</text><line x1="104.5" x2="104.5" y1="341.0" y2="350.0" stroke="#e3e6eb" stroke-width="2"/><text x="103.5" y="375.6" text-anchor="middle" fill="#9ea5b6">09:14</text><text x="103.5" y="398.1" text-anchor="middle" fill="#9ea5b6">09-13</text><line x1="190.3" x2="190.3" y1="341.0" y2="350.0" stroke="#e3e6eb" stroke-width="2"/><text x="189.3" y="375.6" text-anchor="middle" fill="#9ea5b6">09:18</text><text x="189.3" y="398.1" text-anchor="middle" fill="#9ea5b6">09-13</text><line x1="276.1" x2="276.1" y1="341.0" y2="350.0" stroke="#e3e6eb" stroke-width="2"/><text x="275.1" y="375.6" text-anchor="middle" fill="#9ea5b6">09:22</text><text x="275.1" y="398.1" text-anchor="middle" fill="#9ea5b6">09-13</text><line x1="361.9" x2="361.9" y1="341.0" y2="350.0" stroke="#e3e6eb" stroke-width="2"/><text x="360.9" y="375.6" text-anchor="middle" fill="#9ea5b6">09:26</text><text x="360.9" y="398.1" text-anchor="middle" fill="#9ea5b6">09-13</text><line x1="447.8" x2="447.8" y1="341.0" y2="350.0" stroke="#e3e6eb" stroke-width="2"/><text x="446.8" y="375.6" text-anchor="middle" fill="#9ea5b6">09:30</text><text x="446.8" y="398.1" text-anchor="middle" fill="#9ea5b6">09-13</text><line x1="533.6" x2="533.6" y1="341.0" y2="350.0" stroke="#e3e6eb" stroke-width="2"/><text x="532.6" y="375.6" text-anchor="middle" fill="#9ea5b6">09:34</text><text x="532.6" y="398.1" text-anchor="middle" fill="#9ea5b6">09-13</text><line x1="619.4" x2="619.4" y1="341.0" y2="350.0" stroke="#e3e6eb" stroke-width="2"/><text x="618.4" y="375.6" text-anchor="middle" fill="#9ea5b6">09:38</text><text x="618.4" y="398.1" text-anchor="middle" fill="#9ea5b6">09-13</text><line x1="705.2" x2="705.2" y1="341.0" y2="350.0" stroke="#e3e6eb" stroke-width="2"/><text x="704.2" y="375.6" text-anchor="middle" fill="#9ea5b6">09:42</text><text x="704.2" y="398.1" text-anchor="middle" fill="#9ea5b6">09-13</text><polyline fill="none" stroke="#37a2da" stroke-width="4" stroke-linejoin="round" stroke-linecap="round" points="103.5,340.4 125.0,340.3 146.4,340.4 167.9,340.4 189.3,340.4 210.8,340.4 232.2,340.3 253.7,340.4 275.1,340.4 296.6,340.4 318.0,340.4 339.5,340.4 360.9,340.4 382.4,340.4 403.8,340.4 425.3,340.4 446.8,340.4 468.2,340.3 489.7,340.3 511.1,340.3 532.6,340.4 554.0,340.4 575.5,340.4 596.9,340.4 618.4,340.4 639.8,340.4 661.3,340.3 682.7,340.4 704.2,340.3 725.6,340.4 747.1,340.4"/><g fill="#37a2da"><circle cx="103.5" cy="340.4" r="4"/><circle cx="125.0" cy="340.3" r="4"/><circle cx="146.4" cy="340.4" r="4"/><circle cx="167.9" cy="340.4" r="4"/><circle cx="189.3" cy="340.4" r="4"/><circle cx="210.8" cy="340.4" r="4"/><circle cx="232.2" cy="340.3" r="4"/><circle cx="253.7" cy="340.4" r="4"/><circle cx="275.1" cy="340.4" r="4"/><circle cx="296.6" cy="340.4" r="4"/><circle cx="318.0" cy="340.4" r="4"/><circle cx="339.5" cy="340.4" r="4"/><circle cx="360.9" cy="340.4" r="4"/><circle cx="382.4" cy="340.4" r="4"/><circle cx="403.8" cy="340.4" r="4"/><circle cx="425.3" cy="340.4" r="4"/><circle cx="446.8" cy="340.4" r="4"/><circle cx="468.2" cy="340.3" r="4"/><circle cx="489.7" cy="340.3" r="4"/><circle cx="511.1" cy="340.3" r="4"/><circle cx="532.6" cy="340.4" r="4"/><circle cx="554.0" cy="340.4" r="4"/><circle cx="575.5" cy="340.4" r="4"/><circle cx="596.9" cy="340.4" r="4"/><circle cx="618.4" cy="340.4" r="4"/><circle cx="639.8" cy="340.4" r="4"/><circle cx="661.3" cy="340.3" r="4"/><circle cx="682.7" cy="340.4" r="4"/><circle cx="704.2" cy="340.3" r="4"/><circle cx="725.6" cy="340.4" r="4"/><circle cx="747.1" cy="340.4" r="4"/></g><polyline fill="none" stroke="#67e0e3" stroke-width="4" stroke-linejoin="round" stroke-linecap="round" points="103.5,340.1 125.0,339.9 146.4,340.4 167.9,340.4 189.3,340.4 210.8,340.4 232.2,339.9 253.7,340.1 275.1,340.1 296.6,340.1 318.0,340.1 339.5,340.4 360.9,340.4 382.4,340.4 403.8,340.4 425.3,340.4 446.8,340.4 468.2,338.3 489.7,339.8 511.1,339.9 532.6,340.1 554.0,340.4 575.5,340.4 596.9,340.4 618.4,340.4 639.8,340.4 661.3,339.9 682.7,340.1 704.2,339.9 725.6,340.1 747.1,340.1"/><g fill="#67e0e3"><circle cx="103.5" cy="340.1" r="4"/><circle cx="125.0" cy="339.9" r="4"/><circle cx="146.4" cy="340.4" r="4"/><circle cx="167.9" cy="340.4" r="4"/><circle cx="189.3" cy="340.4" r="4"/><circle cx="210.8" cy="340.4" r="4"/><circle cx="232.2" cy="339.9" r="4"/><circle cx="253.7" cy="340.1" r="4"/><circle cx="275.1" cy="340.1" r="4"/><circle cx="296.6" cy="340.1" r="4"/><circle cx="318.0" cy="340.1" r="4"/><circle cx="339.5" cy="340.4" r="4"/><circle cx="360.9" cy="340.4" r="4"/><circle cx="382.4" cy="340.4" r="4"/><circle cx="403.8" cy="340.4" r="4"/><circle cx="425.3" cy="340.4" r="4"/><circle cx="446.8" cy="340.4" r="4"/><circle cx="468.2" cy="338.3" r="4"/><circle cx="489.7" cy="339.8" r="4"/><circle cx="511.1" cy="339.9" r="4"/><circle cx="532.6" cy="340.1" r="4"/><circle cx="554.0" cy="340.4" r="4"/><circle cx="575.5" cy="340.4" r="4"/><circle cx="596.9" cy="340.4" r="4"/><circle cx="618.4" cy="340.4" r="4"/><circle cx="639.8" cy="340.4" r="4"/><circle cx="661.3" cy="339.9" r="4"/><circle cx="682.7" cy="340.1" r="4"/><circle cx="704.2" cy="339.9" r="4"/><circle cx="725.6" cy="340.1" r="4"/><circle cx="747.1" cy="340.1" r="4"/></g><polyline fill="none" stroke="#ffdb5c" stroke-width="4" stroke-linejoin="round" stroke-linecap="round" points="103.5,338.9 125.0,338.1 146.4,340.3 167.9,340.3 189.3,340.3 210.8,340.3 232.2,323.1 253.7,339.3 275.1,339.3 296.6,339.3 318.0,339.3 339.5,340.3 360.9,340.3 382.4,340.3 403.8,340.3 425.3,340.3 446.8,340.3 468.2,318.1 489.7,338.1 511.1,338.6 532.6,339.3 554.0,340.3 575.5,340.3 596.9,340.3 618.4,340.3 639.8,340.3 661.3,320.6 682.7,339.3 704.2,338.9 725.6,339.3 747.1,339.3"/><g fill="#ffdb5c"><circle cx="103.5" cy="338.9" r="4"/><circle cx="125.0" cy="338.1" r="4"/><circle cx="146.4" cy="340.3" r="4"/><circle cx="167.9" cy="340.3" r="4"/><circle cx="189.3" cy="340.3" r="4"/><circle cx="210.8" cy="340.3" r="4"/><circle cx="232.2" cy="323.1" r="4"/><circle cx="253.7" cy="339.3" r="4"/><circle cx="275.1" cy="339.3" r="4"/><circle cx="296.6" cy="339.3" r="4"/><circle cx="318.0" cy="339.3" r="4"/><circle cx="339.5" cy="340.3" r="4"/><circle cx="360.9" cy="340.3" r="4"/><circle cx="382.4" cy="340.3" r="4"/><circle cx="403.8" cy="340.3" r="4"/><circle cx="425.3" cy="340.3" r="4"/><circle cx="446.8" cy="340.3" r="4"/><circle cx="468.2" cy="318.1" r="4"/><circle cx="489.7" cy="338.1" r="4"/><circle cx="511.1" cy="338.6" r="4"/><circle cx="532.6" cy="339.3" r="4"/><circle cx="554.0" cy="340.3" r="4"/><circle cx="575.5" cy="340.3" r="4"/><circle cx="596.9" cy="340.3" r="4"/><circle cx="618.4" cy="340.3" r="4"/><circle cx="639.8" cy="340.3" r="4"/><circle cx="661.3" cy="320.6" r="4"/><circle cx="682.7" cy="339.3" r="4"/><circle cx="704.2" cy="338.9" r="4"/><circle cx="725.6" cy="339.3" r="4"/><circle cx="747.1" cy="339.3" r="4"/></g><polyline fill="none" stroke="#ff9f7f" stroke-width="4" stroke-linejoin="round" stroke-linecap="round" points="103.5,338.9 125.0,338.1 146.4,340.3 167.9,340.3 189.3,340.3 210.8,340.3 232.2,323.1 253.7,339.3 275.1,339.3 296.6,339.3 318.0,339.3 339.5,340.3 360.9,340.3 382.4,340.3 403.8,340.3 425.3,340.3 446.8,340.3 468.2,318.1 489.7,338.1 511.1,338.6 532.6,339.3 554.0,340.3 575.5,340.3 596.9,340.3 618.4,340.3 639.8,340.3 661.3,320.6 682.7,339.3 704.2,338.9 725.6,339.3 747.1,339.3"/><g fill="#ff9f7f"><circle cx="103.5" cy="338.9" r="4"/><circle cx="125.0" cy="338.1" r="4"/><circle cx="146.4" cy="340.3" r="4"/><circle cx="167.9" cy="340.3" r="4"/><circle cx="189.3" cy="340.3" r="4"/><circle cx="210.8" cy="340.3" r="4"/><circle cx="232.2" cy="323.1" r="4"/><circle cx="253.7" cy="339.3" r="4"/><circle cx="275.1" cy="339.3" r="4"/><circle cx="296.6" cy="339.3" r="4"/><circle cx="318.0" cy="339.3" r="4"/><circle cx="339.5" cy="340.3" r="4"/><circle cx="360.9" cy="340.3" r="4"/><circle cx="382.4" cy="340.3" r="4"/><circle cx="403.8" cy="340.3" r="4"/><circle cx="425.3" cy="340.3" r="4"/><circle cx="446.8" cy="340.3" r="4"/><circle cx="468.2" cy="318.1" r="4"/><circle cx="489.7" cy="338.1" r="4"/><circle cx="511.1" cy="338.6" r="4"/><circle cx="532.6" cy="339.3" r="4"/><circle cx="554.0" cy="340.3" r="4"/><circle cx="575.5" cy="340.3" r="4"/><circle cx="596.9" cy="340.3" r="4"/><circle cx="618.4" cy="340.3" r="4"/><circle cx="639.8" cy="340.3" r="4"/><circle cx="661.3" cy="320.6" r="4"/><circle cx="682.7" cy="339.3" r="4"/><circle cx="704.2" cy="338.9" r="4"/><circle cx="725.6" cy="339.3" r="4"/><circle cx="747.1" cy="339.3" r="4"/></g><polyline fill="none" stroke="#e062ae" stroke-width="4" stroke-linejoin="round" stroke-linecap="round" points="103.5,338.1 125.0,333.9 146.4,340.1 167.9,340.1 189.3,340.1 210.8,340.1 232.2,214.8 253.7,338.6 275.1,338.6 296.6,338.6 318.0,338.6 339.5,340.1 360.9,340.1 382.4,340.1 403.8,340.1 425.3,340.1 446.8,340.1 468.2,141.5 489.7,337.3 511.1,337.3 532.6,338.6 554.0,340.1 575.5,340.1 596.9,340.1 618.4,340.1 639.8,340.1 661.3,186.5 682.7,338.9 704.2,337.3 725.6,338.6 747.1,338.6"/><g fill="#e062ae"><circle cx="103.5" cy="338.1" r="4"/><circle cx="125.0" cy="333.9" r="4"/><circle cx="146.4" cy="340.1" r="4"/><circle cx="167.9" cy="340.1" r="4"/><circle cx="189.3" cy="340.1" r="4"/><circle cx="210.8" cy="340.1" r="4"/><circle cx="232.2" cy="214.8" r="4"/><circle cx="253.7" cy="338.6" r="4"/><circle cx="275.1" cy="338.6" r="4"/><circle cx="296.6" cy="338.6" r="4"/><circle cx="318.0" cy="338.6" r="4"/><circle cx="339.5" cy="340.1" r="4"/><circle cx="360.9" cy="340.1" r="4"/><circle cx="382.4" cy="340.1" r="4"/><circle cx="403.8" cy="340.1" r="4"/><circle cx="425.3" cy="340.1" r="4"/><circle cx="446.8" cy="340.1" r="4"/><circle cx="468.2" cy="141.5" r="4"/><circle cx="489.7" cy="337.3" r="4"/><circle cx="511.1" cy="337.3" r="4"/><circle cx="532.6" cy="338.6" r="4"/><circle cx="554.0" cy="340.1" r="4"/><circle cx="575.5" cy="340.1" r="4"/><circle cx="596.9" cy="340.1" r="4"/><circle cx="618.4" cy="340.1" r="4"/><circle cx="639.8" cy="340.1" r="4"/><circle cx="661.3" cy="186.5" r="4"/><circle cx="682.7" cy="338.9" r="4"/><circle cx="704.2" cy="337.3" r="4"/><circle cx="725.6" cy="338.6" r="4"/><circle cx="747.1" cy="338.6" r="4"/></g><circle cx="41.7" cy="95.200" r="11.800" fill="#37a2da"/><text x="65.5" y="104.600" fill="#333" font-size="24">P50</text><circle cx="138.7" cy="95.200" r="11.800" fill="#67e0e3"/><text x="162.5" y="104.600" fill="#333" font-size="24">P75</text><circle cx="235.2" cy="95.200" r="11.800" fill="#ffdb5c"/><text x="259.0" y="104.600" fill="#333" font-size="24">P90</text><circle cx="332.2" cy="95.200" r="11.800" fill="#ff9f7f"/><text x="356.0" y="104.600" fill="#333" font-size="24">P95</text><circle cx="429.2" cy="95.200" r="11.800" fill="#e062ae"/><text x="453.0" y="104.600" fill="#333" font-size="24">P99</text></svg></div>
<div class="w" style="left:2934.00px;top:946px;width:798.00px;height:420px"><div class="hd"></div><div class="tt">Service Load (calls / min)</div><svg class="abs" style="left:765.5px;top:16px" width="8" height="30" viewBox="0 0 8 30"><g fill="#858585"><circle cx="4" cy="3.500" r="3"/><circle cx="4" cy="14.100" r="3"/><circle cx="4" cy="24.600" r="3"/></g></svg><svg class="abs" style="left:724.5px;top:17px" width="26" height="26" viewBox="0 0 26 26"><circle cx="13" cy="13" r="10.400" fill="none" stroke="#1e3048" stroke-width="2.300"/><rect x="11.800" y="11.800" width="2.400" height="6.900" fill="#1e3048"/><circle cx="13" cy="8.200" r="1.300" fill="#1e3048"/></svg><svg class="ch" width="798.00" height="420" viewBox="0 0 798.00 420" font-family="Noto Sans CJK SC, Liberation Sans, sans-serif" font-size="23"><line x1="61.9" x2="757.9" y1="341.0" y2="341.0" stroke="#e9ebed" stroke-width="2" stroke-dasharray="8 4"/><line x1="61.9" x2="757.9" y1="299.3" y2="299.3" stroke="#e9ebed" stroke-width="2" stroke-dasharray="8 4"/><line x1="61.9" x2="757.9" y1="257.7" y2="257.7" stroke="#e9ebed" stroke-width="2" stroke-dasharray="8 4"/><line x1="61.9" x2="757.9" y1="216.0" y2="216.0" stroke="#e9ebed" stroke-width="2" stroke-dasharray="8 4"/><line x1="61.9" x2="757.9" y1="174.4" y2="174.4" stroke="#e9ebed" stroke-width="2" stroke-dasharray="8 4"/><line x1="61.9" x2="757.9" y1="132.8" y2="132.8" stroke="#e9ebed" stroke-width="2" stroke-dasharray="8 4"/><line x1="61.9" x2="757.9" y1="91.1" y2="91.1" stroke="#e9ebed" stroke-width="2" stroke-dasharray="8 4"/><text x="45.4" y="349.6" text-anchor="end" fill="#9ea5b6">0</text><text x="45.4" y="307.9" text-anchor="end" fill="#9ea5b6">3</text><text x="45.4" y="266.3" text-anchor="end" fill="#9ea5b6">6</text><text x="45.4" y="224.6" text-anchor="end" fill="#9ea5b6">9</text><text x="45.4" y="183.0" text-anchor="end" fill="#9ea5b6">12</text><text x="45.4" y="141.4" text-anchor="end" fill="#9ea5b6">15</text><text x="45.4" y="99.7" text-anchor="end" fill="#9ea5b6">18</text><line x1="74.1" x2="74.1" y1="341.0" y2="350.0" stroke="#e3e6eb" stroke-width="2"/><text x="73.1" y="375.6" text-anchor="middle" fill="#9ea5b6">09:14</text><text x="73.1" y="398.1" text-anchor="middle" fill="#9ea5b6">09-13</text><line x1="163.9" x2="163.9" y1="341.0" y2="350.0" stroke="#e3e6eb" stroke-width="2"/><text x="162.9" y="375.6" text-anchor="middle" fill="#9ea5b6">09:18</text><text x="162.9" y="398.1" text-anchor="middle" fill="#9ea5b6">09-13</text><line x1="253.7" x2="253.7" y1="341.0" y2="350.0" stroke="#e3e6eb" stroke-width="2"/><text x="252.7" y="375.6" text-anchor="middle" fill="#9ea5b6">09:22</text><text x="252.7" y="398.1" text-anchor="middle" fill="#9ea5b6">09-13</text><line x1="343.5" x2="343.5" y1="341.0" y2="350.0" stroke="#e3e6eb" stroke-width="2"/><text x="342.5" y="375.6" text-anchor="middle" fill="#9ea5b6">09:26</text><text x="342.5" y="398.1" text-anchor="middle" fill="#9ea5b6">09-13</text><line x1="433.4" x2="433.4" y1="341.0" y2="350.0" stroke="#e3e6eb" stroke-width="2"/><text x="432.4" y="375.6" text-anchor="middle" fill="#9ea5b6">09:30</text><text x="432.4" y="398.1" text-anchor="middle" fill="#9ea5b6">09-13</text><line x1="523.2" x2="523.2" y1="341.0" y2="350.0" stroke="#e3e6eb" stroke-width="2"/><text x="522.2" y="375.6" text-anchor="middle" fill="#9ea5b6">09:34</text><text x="522.2" y="398.1" text-anchor="middle" fill="#9ea5b6">09-13</text><line x1="613.0" x2="613.0" y1="341.0" y2="350.0" stroke="#e3e6eb" stroke-width="2"/><text x="612.0" y="375.6" text-anchor="middle" fill="#9ea5b6">09:38</text><text x="612.0" y="398.1" text-anchor="middle" fill="#9ea5b6">09-13</text><line x1="702.8" x2="702.8" y1="341.0" y2="350.0" stroke="#e3e6eb" stroke-width="2"/><text x="701.8" y="375.6" text-anchor="middle" fill="#9ea5b6">09:42</text><text x="701.8" y="398.1" text-anchor="middle" fill="#9ea5b6">09-13</text><polyline fill="none" stroke="#37a2da" stroke-width="4" stroke-linejoin="round" stroke-linecap="round" points="73.1,146.2 95.6,160.1 118.0,174.0 140.5,174.0 162.9,174.0 185.4,174.0 207.8,160.1 230.3,118.5 252.7,146.2 275.2,146.2 297.6,118.5 320.1,174.0 342.5,174.0 365.0,174.0 387.4,174.0 409.9,174.0 432.4,201.8 454.8,132.4 477.3,132.4 499.7,90.7 522.2,132.4 544.6,174.0 567.1,174.0 589.5,174.0 612.0,174.0 634.4,174.0 656.9,160.1 679.3,118.5 701.8,118.5 724.2,146.2 746.7,104.6"/><g fill="#37a2da"><circle cx="73.1" cy="146.2" r="4"/><circle cx="95.6" cy="160.1" r="4"/><circle cx="118.0" cy="174.0" r="4"/><circle cx="140.5" cy="174.0" r="4"/><circle cx="162.9" cy="174.0" r="4"/><circle cx="185.4" cy="174.0" r="4"/><circle cx="207.8" cy="160.1" r="4"/><circle cx="230.3" cy="118.5" r="4"/><circle cx="252.7" cy="146.2" r="4"/><circle cx="275.2" cy="146.2" r="4"/><circle cx="297.6" cy="118.5" r="4"/><circle cx="320.1" cy="174.0" r="4"/><circle cx="342.5" cy="174.0" r="4"/><circle cx="365.0" cy="174.0" r="4"/><circle cx="387.4" cy="174.0" r="4"/><circle cx="409.9" cy="174.0" r="4"/><circle cx="432.4" cy="201.8" r="4"/><circle cx="454.8" cy="132.4" r="4"/><circle cx="477.3" cy="132.4" r="4"/><circle cx="499.7" cy="90.7" r="4"/><circle cx="522.2" cy="132.4" r="4"/><circle cx="544.6" cy="174.0" r="4"/><circle cx="567.1" cy="174.0" r="4"/><circle cx="589.5" cy="174.0" r="4"/><circle cx="612.0" cy="174.0" r="4"/><circle cx="634.4" cy="174.0" r="4"/><circle cx="656.9" cy="160.1" r="4"/><circle cx="679.3" cy="118.5" r="4"/><circle cx="701.8" cy="118.5" r="4"/><circle cx="724.2" cy="146.2" r="4"/><circle cx="746.7" cy="104.6" r="4"/></g></svg></div>
<div class="w" style="left:480.00px;top:1386px;width:1070.00px;height:420px"><div class="hd"></div><div class="tt">Success Rate (%)</div><svg class="abs" style="left:1037.5px;top:16px" width="8" height="30" viewBox="0 0 8 30"><g fill="#858585"><circle cx="4" cy="3.500" r="3"/><circle cx="4" cy="14.100" r="3"/><circle cx="4" cy="24.600" r="3"/></g></svg><svg class="ch" width="1070.00" height="420" viewBox="0 0 1070.00 420" font-family="Noto Sans CJK SC, Liberation Sans, sans-serif" font-size="23"><line x1="74.6" x2="1030.0" y1="341.0" y2="341.0" stroke="#e9ebed" stroke-width="2" stroke-dasharray="8 4"/><line x1="74.6" x2="1030.0" y1="291.0" y2="291.0" stroke="#e9ebed" stroke-width="2" stroke-dasharray="8 4"/><line x1="74.6" x2="1030.0" y1="240.9" y2="240.9" stroke="#e9ebed" stroke-width="2" stroke-dasharray="8 4"/><line x1="74.6" x2="1030.0" y1="190.9" y2="190.9" stroke="#e9ebed" stroke-width="2" stroke-dasharray="8 4"/><line x1="74.6" x2="1030.0" y1="140.8" y2="140.8" stroke="#e9ebed" stroke-width="2" stroke-dasharray="8 4"/><line x1="74.6" x2="1030.0" y1="90.8" y2="90.8" stroke="#e9ebed" stroke-width="2" stroke-dasharray="8 4"/><text x="58.1" y="349.6" text-anchor="end" fill="#9ea5b6">0</text><text x="58.1" y="299.6" text-anchor="end" fill="#9ea5b6">20</text><text x="58.1" y="249.5" text-anchor="end" fill="#9ea5b6">40</text><text x="58.1" y="199.5" text-anchor="end" fill="#9ea5b6">60</text><text x="58.1" y="149.4" text-anchor="end" fill="#9ea5b6">80</text><text x="58.1" y="99.4" text-anchor="end" fill="#9ea5b6">100</text><line x1="91.0" x2="91.0" y1="341.0" y2="350.0" stroke="#e3e6eb" stroke-width="2"/><text x="90.0" y="375.6" text-anchor="middle" fill="#9ea5b6">09:14</text><text x="90.0" y="398.1" text-anchor="middle" fill="#9ea5b6">09-13</text><line x1="183.5" x2="183.5" y1="341.0" y2="350.0" stroke="#e3e6eb" stroke-width="2"/><text x="182.5" y="375.6" text-anchor="middle" fill="#9ea5b6">09:17</text><text x="182.5" y="398.1" text-anchor="middle" fill="#9ea5b6">09-13</text><line x1="275.9" x2="275.9" y1="341.0" y2="350.0" stroke="#e3e6eb" stroke-width="2"/><text x="274.9" y="375.6" text-anchor="middle" fill="#9ea5b6">09:20</text><text x="274.9" y="398.1" text-anchor="middle" fill="#9ea5b6">09-13</text><line x1="368.4" x2="368.4" y1="341.0" y2="350.0" stroke="#e3e6eb" stroke-width="2"/><text x="367.4" y="375.6" text-anchor="middle" fill="#9ea5b6">09:23</text><text x="367.4" y="398.1" text-anchor="middle" fill="#9ea5b6">09-13</text><line x1="460.8" x2="460.8" y1="341.0" y2="350.0" stroke="#e3e6eb" stroke-width="2"/><text x="459.8" y="375.6" text-anchor="middle" fill="#9ea5b6">09:26</text><text x="459.8" y="398.1" text-anchor="middle" fill="#9ea5b6">09-13</text><line x1="553.3" x2="553.3" y1="341.0" y2="350.0" stroke="#e3e6eb" stroke-width="2"/><text x="552.3" y="375.6" text-anchor="middle" fill="#9ea5b6">09:29</text><text x="552.3" y="398.1" text-anchor="middle" fill="#9ea5b6">09-13</text><line x1="645.8" x2="645.8" y1="341.0" y2="350.0" stroke="#e3e6eb" stroke-width="2"/><text x="644.8" y="375.6" text-anchor="middle" fill="#9ea5b6">09:32</text><text x="644.8" y="398.1" text-anchor="middle" fill="#9ea5b6">09-13</text><line x1="738.2" x2="738.2" y1="341.0" y2="350.0" stroke="#e3e6eb" stroke-width="2"/><text x="737.2" y="375.6" text-anchor="middle" fill="#9ea5b6">09:35</text><text x="737.2" y="398.1" text-anchor="middle" fill="#9ea5b6">09-13</text><line x1="830.7" x2="830.7" y1="341.0" y2="350.0" stroke="#e3e6eb" stroke-width="2"/><text x="829.7" y="375.6" text-anchor="middle" fill="#9ea5b6">09:38</text><text x="829.7" y="398.1" text-anchor="middle" fill="#9ea5b6">09-13</text><line x1="923.1" x2="923.1" y1="341.0" y2="350.0" stroke="#e3e6eb" stroke-width="2"/><text x="922.1" y="375.6" text-anchor="middle" fill="#9ea5b6">09:41</text><text x="922.1" y="398.1" text-anchor="middle" fill="#9ea5b6">09-13</text><line x1="1015.6" x2="1015.6" y1="341.0" y2="350.0" stroke="#e3e6eb" stroke-width="2"/><text x="1014.6" y="375.6" text-anchor="middle" fill="#9ea5b6">09:44</text><text x="1014.6" y="398.1" text-anchor="middle" fill="#9ea5b6">09-13</text><polyline fill="none" stroke="#37a2da" stroke-width="4" stroke-linejoin="round" stroke-linecap="round" points="90.0,90.4 120.8,90.4 151.6,90.4 182.5,90.4 213.3,90.4 244.1,90.4 274.9,90.4 305.7,90.4 336.6,90.4 367.4,90.4 398.2,90.4 429.0,90.4 459.8,90.4 490.7,90.4 521.5,90.4 552.3,90.4 583.1,90.4 613.9,90.4 644.8,90.4 675.6,90.4 706.4,90.4 737.2,90.4 768.0,90.4 798.9,90.4 829.7,90.4 860.5,90.4 891.3,90.4 922.1,90.4 953.0,90.4 983.8,90.4 1014.6,90.4"/><g fill="#37a2da"><circle cx="90.0" cy="90.4" r="4"/><circle cx="120.8" cy="90.4" r="4"/><circle cx="151.6" cy="90.4" r="4"/><circle cx="182.5" cy="90.4" r="4"/><circle cx="213.3" cy="90.4" r="4"/><circle cx="244.1" cy="90.4" r="4"/><circle cx="274.9" cy="90.4" r="4"/><circle cx="305.7" cy="90.4" r="4"/><circle cx="336.6" cy="90.4" r="4"/><circle cx="367.4" cy="90.4" r="4"/><circle cx="398.2" cy="90.4" r="4"/><circle cx="429.0" cy="90.4" r="4"/><circle cx="459.8" cy="90.4" r="4"/><circle cx="490.7" cy="90.4" r="4"/><circle cx="521.5" cy="90.4" r="4"/><circle cx="552.3" cy="90.4" r="4"/><circle cx="583.1" cy="90.4" r="4"/><circle cx="613.9" cy="90.4" r="4"/><circle cx="644.8" cy="90.4" r="4"/><circle cx="675.6" cy="90.4" r="4"/><circle cx="706.4" cy="90.4" r="4"/><circle cx="737.2" cy="90.4" r="4"/><circle cx="768.0" cy="90.4" r="4"/><circle cx="798.9" cy="90.4" r="4"/><circle cx="829.7" cy="90.4" r="4"/><circle cx="860.5" cy="90.4" r="4"/><circle cx="891.3" cy="90.4" r="4"/><circle cx="922.1" cy="90.4" r="4"/><circle cx="953.0" cy="90.4" r="4"/><circle cx="983.8" cy="90.4" r="4"/><circle cx="1014.6" cy="90.4" r="4"/></g></svg></div>
<div class="w" style="left:1570.00px;top:1386px;width:1070.00px;height:420px"><div class="hd"></div><div class="tt">Message Queue Consuming Count</div><svg class="abs" style="left:1037.5px;top:16px" width="8" height="30" viewBox="0 0 8 30"><g fill="#858585"><circle cx="4" cy="3.500" r="3"/><circle cx="4" cy="14.100" r="3"/><circle cx="4" cy="24.600" r="3"/></g></svg><svg class="ch" width="1070.00" height="420" viewBox="0 0 1070.00 420" font-family="Noto Sans CJK SC, Liberation Sans, sans-serif" font-size="23"><line x1="49.0" x2="1029.7" y1="341.0" y2="341.0" stroke="#e9ebed" stroke-width="2" stroke-dasharray="8 4"/><line x1="49.0" x2="1029.7" y1="299.3" y2="299.3" stroke="#e9ebed" stroke-width="2" stroke-dasharray="8 4"/><line x1="49.0" x2="1029.7" y1="257.6" y2="257.6" stroke="#e9ebed" stroke-width="2" stroke-dasharray="8 4"/><line x1="49.0" x2="1029.7" y1="215.9" y2="215.9" stroke="#e9ebed" stroke-width="2" stroke-dasharray="8 4"/><line x1="49.0" x2="1029.7" y1="174.2" y2="174.2" stroke="#e9ebed" stroke-width="2" stroke-dasharray="8 4"/><line x1="49.0" x2="1029.7" y1="132.5" y2="132.5" stroke="#e9ebed" stroke-width="2" stroke-dasharray="8 4"/><line x1="49.0" x2="1029.7" y1="90.8" y2="90.8" stroke="#e9ebed" stroke-width="2" stroke-dasharray="8 4"/><text x="32.5" y="349.6" text-anchor="end" fill="#9ea5b6">0</text><text x="32.5" y="307.9" text-anchor="end" fill="#9ea5b6">1</text><text x="32.5" y="266.2" text-anchor="end" fill="#9ea5b6">2</text><text x="32.5" y="224.5" text-anchor="end" fill="#9ea5b6">3</text><text x="32.5" y="182.8" text-anchor="end" fill="#9ea5b6">4</text><text x="32.5" y="141.1" text-anchor="end" fill="#9ea5b6">5</text><text x="32.5" y="99.4" text-anchor="end" fill="#9ea5b6">6</text><line x1="65.8" x2="65.8" y1="341.0" y2="350.0" stroke="#e3e6eb" stroke-width="2"/><text x="64.8" y="375.6" text-anchor="middle" fill="#9ea5b6">09:14</text><text x="64.8" y="398.1" text-anchor="middle" fill="#9ea5b6">09-13</text><line x1="160.7" x2="160.7" y1="341.0" y2="350.0" stroke="#e3e6eb" stroke-width="2"/><text x="159.7" y="375.6" text-anchor="middle" fill="#9ea5b6">09:17</text><text x="159.7" y="398.1" text-anchor="middle" fill="#9ea5b6">09-13</text><line x1="255.6" x2="255.6" y1="341.0" y2="350.0" stroke="#e3e6eb" stroke-width="2"/><text x="254.6" y="375.6" text-anchor="middle" fill="#9ea5b6">09:20</text><text x="254.6" y="398.1" text-anchor="middle" fill="#9ea5b6">09-13</text><line x1="350.5" x2="350.5" y1="341.0" y2="350.0" stroke="#e3e6eb" stroke-width="2"/><text x="349.5" y="375.6" text-anchor="middle" fill="#9ea5b6">09:23</text><text x="349.5" y="398.1" text-anchor="middle" fill="#9ea5b6">09-13</text><line x1="445.4" x2="445.4" y1="341.0" y2="350.0" stroke="#e3e6eb" stroke-width="2"/><text x="444.4" y="375.6" text-anchor="middle" fill="#9ea5b6">09:26</text><text x="444.4" y="398.1" text-anchor="middle" fill="#9ea5b6">09-13</text><line x1="540.3" x2="540.3" y1="341.0" y2="350.0" stroke="#e3e6eb" stroke-width="2"/><text x="539.3" y="375.6" text-anchor="middle" fill="#9ea5b6">09:29</text><text x="539.3" y="398.1" text-anchor="middle" fill="#9ea5b6">09-13</text><line x1="635.3" x2="635.3" y1="341.0" y2="350.0" stroke="#e3e6eb" stroke-width="2"/><text x="634.3" y="375.6" text-anchor="middle" fill="#9ea5b6">09:32</text><text x="634.3" y="398.1" text-anchor="middle" fill="#9ea5b6">09-13</text><line x1="730.2" x2="730.2" y1="341.0" y2="350.0" stroke="#e3e6eb" stroke-width="2"/><text x="729.2" y="375.6" text-anchor="middle" fill="#9ea5b6">09:35</text><text x="729.2" y="398.1" text-anchor="middle" fill="#9ea5b6">09-13</text><line x1="825.1" x2="825.1" y1="341.0" y2="350.0" stroke="#e3e6eb" stroke-width="2"/><text x="824.1" y="375.6" text-anchor="middle" fill="#9ea5b6">09:38</text><text x="824.1" y="398.1" text-anchor="middle" fill="#9ea5b6">09-13</text><line x1="920.0" x2="920.0" y1="341.0" y2="350.0" stroke="#e3e6eb" stroke-width="2"/><text x="919.0" y="375.6" text-anchor="middle" fill="#9ea5b6">09:41</text><text x="919.0" y="398.1" text-anchor="middle" fill="#9ea5b6">09-13</text><line x1="1014.9" x2="1014.9" y1="341.0" y2="350.0" stroke="#e3e6eb" stroke-width="2"/><text x="1013.9" y="375.6" text-anchor="middle" fill="#9ea5b6">09:44</text><text x="1013.9" y="398.1" text-anchor="middle" fill="#9ea5b6">09-13</text><polyline fill="none" stroke="#37a2da" stroke-width="4" stroke-linejoin="round" stroke-linecap="round" points="64.8,257.2 96.5,298.9"/><polyline fill="none" stroke="#37a2da" stroke-width="4" stroke-linejoin="round" stroke-linecap="round" points="254.6,298.9 286.3,173.8 317.9,257.2 349.5,257.2 381.2,173.8"/><polyline fill="none" stroke="#37a2da" stroke-width="4" stroke-linejoin="round" stroke-linecap="round" points="602.6,215.5 634.3,215.5 665.9,90.4 697.5,215.5"/><polyline fill="none" stroke="#37a2da" stroke-width="4" stroke-linejoin="round" stroke-linecap="round" points="887.3,298.9 919.0,173.8 950.6,173.8 982.2,257.2 1013.9,132.1"/><g fill="#37a2da"><circle cx="64.8" cy="257.2" r="4"/><circle cx="96.5" cy="298.9" r="4"/><circle cx="254.6" cy="298.9" r="4"/><circle cx="286.3" cy="173.8" r="4"/><circle cx="317.9" cy="257.2" r="4"/><circle cx="349.5" cy="257.2" r="4"/><circle cx="381.2" cy="173.8" r="4"/><circle cx="602.6" cy="215.5" r="4"/><circle cx="634.3" cy="215.5" r="4"/><circle cx="665.9" cy="90.4" r="4"/><circle cx="697.5" cy="215.5" r="4"/><circle cx="887.3" cy="298.9" r="4"/><circle cx="919.0" cy="173.8" r="4"/><circle cx="950.6" cy="173.8" r="4"/><circle cx="982.2" cy="257.2" r="4"/><circle cx="1013.9" cy="132.1" r="4"/></g></svg></div>
<div class="w" style="left:2662.00px;top:1386px;width:1070.00px;height:420px"><div class="hd"></div><div class="tt">Message Queue Avg Consuming Latency (ms)</div><svg class="abs" style="left:1037.5px;top:16px" width="8" height="30" viewBox="0 0 8 30"><g fill="#858585"><circle cx="4" cy="3.500" r="3"/><circle cx="4" cy="14.100" r="3"/><circle cx="4" cy="24.600" r="3"/></g></svg><svg class="abs" style="left:996.5px;top:17px" width="26" height="26" viewBox="0 0 26 26"><circle cx="13" cy="13" r="10.400" fill="none" stroke="#1e3048" stroke-width="2.300"/><rect x="11.800" y="11.800" width="2.400" height="6.900" fill="#1e3048"/><circle cx="13" cy="8.200" r="1.300" fill="#1e3048"/></svg><svg class="ch" width="1070.00" height="420" viewBox="0 0 1070.00 420" font-family="Noto Sans CJK SC, Liberation Sans, sans-serif" font-size="23"><line x1="61.6" x2="1029.9" y1="341.0" y2="341.0" stroke="#e9ebed" stroke-width="2" stroke-dasharray="8 4"/><line x1="61.6" x2="1029.9" y1="278.4" y2="278.4" stroke="#e9ebed" stroke-width="2" stroke-dasharray="8 4"/><line x1="61.6" x2="1029.9" y1="215.9" y2="215.9" stroke="#e9ebed" stroke-width="2" stroke-dasharray="8 4"/><line x1="61.6" x2="1029.9" y1="153.4" y2="153.4" stroke="#e9ebed" stroke-width="2" stroke-dasharray="8 4"/><line x1="61.6" x2="1029.9" y1="90.8" y2="90.8" stroke="#e9ebed" stroke-width="2" stroke-dasharray="8 4"/><text x="45.1" y="349.6" text-anchor="end" fill="#9ea5b6">0</text><text x="45.1" y="287.0" text-anchor="end" fill="#9ea5b6">5</text><text x="45.1" y="224.5" text-anchor="end" fill="#9ea5b6">10</text><text x="45.1" y="162.0" text-anchor="end" fill="#9ea5b6">15</text><text x="45.1" y="99.4" text-anchor="end" fill="#9ea5b6">20</text><line x1="78.2" x2="78.2" y1="341.0" y2="350.0" stroke="#e3e6eb" stroke-width="2"/><text x="77.2" y="375.6" text-anchor="middle" fill="#9ea5b6">09:14</text><text x="77.2" y="398.1" text-anchor="middle" fill="#9ea5b6">09-13</text><line x1="171.9" x2="171.9" y1="341.0" y2="350.0" stroke="#e3e6eb" stroke-width="2"/><text x="170.9" y="375.6" text-anchor="middle" fill="#9ea5b6">09:17</text><text x="170.9" y="398.1" text-anchor="middle" fill="#9ea5b6">09-13</text><line x1="265.6" x2="265.6" y1="341.0" y2="350.0" stroke="#e3e6eb" stroke-width="2"/><text x="264.6" y="375.6" text-anchor="middle" fill="#9ea5b6">09:20</text><text x="264.6" y="398.1" text-anchor="middle" fill="#9ea5b6">09-13</text><line x1="359.3" x2="359.3" y1="341.0" y2="350.0" stroke="#e3e6eb" stroke-width="2"/><text x="358.3" y="375.6" text-anchor="middle" fill="#9ea5b6">09:23</text><text x="358.3" y="398.1" text-anchor="middle" fill="#9ea5b6">09-13</text><line x1="453.0" x2="453.0" y1="341.0" y2="350.0" stroke="#e3e6eb" stroke-width="2"/><text x="452.0" y="375.6" text-anchor="middle" fill="#9ea5b6">09:26</text><text x="452.0" y="398.1" text-anchor="middle" fill="#9ea5b6">09-13</text><line x1="546.8" x2="546.8" y1="341.0" y2="350.0" stroke="#e3e6eb" stroke-width="2"/><text x="545.8" y="375.6" text-anchor="middle" fill="#9ea5b6">09:29</text><text x="545.8" y="398.1" text-anchor="middle" fill="#9ea5b6">09-13</text><line x1="640.5" x2="640.5" y1="341.0" y2="350.0" stroke="#e3e6eb" stroke-width="2"/><text x="639.5" y="375.6" text-anchor="middle" fill="#9ea5b6">09:32</text><text x="639.5" y="398.1" text-anchor="middle" fill="#9ea5b6">09-13</text><line x1="734.2" x2="734.2" y1="341.0" y2="350.0" stroke="#e3e6eb" stroke-width="2"/><text x="733.2" y="375.6" text-anchor="middle" fill="#9ea5b6">09:35</text><text x="733.2" y="398.1" text-anchor="middle" fill="#9ea5b6">09-13</text><line x1="827.9" x2="827.9" y1="341.0" y2="350.0" stroke="#e3e6eb" stroke-width="2"/><text x="826.9" y="375.6" text-anchor="middle" fill="#9ea5b6">09:38</text><text x="826.9" y="398.1" text-anchor="middle" fill="#9ea5b6">09-13</text><line x1="921.6" x2="921.6" y1="341.0" y2="350.0" stroke="#e3e6eb" stroke-width="2"/><text x="920.6" y="375.6" text-anchor="middle" fill="#9ea5b6">09:41</text><text x="920.6" y="398.1" text-anchor="middle" fill="#9ea5b6">09-13</text><line x1="1015.3" x2="1015.3" y1="341.0" y2="350.0" stroke="#e3e6eb" stroke-width="2"/><text x="1014.3" y="375.6" text-anchor="middle" fill="#9ea5b6">09:44</text><text x="1014.3" y="398.1" text-anchor="middle" fill="#9ea5b6">09-13</text><polyline fill="none" stroke="#37a2da" stroke-width="4" stroke-linejoin="round" stroke-linecap="round" points="77.2,240.5 108.5,90.4"/><polyline fill="none" stroke="#37a2da" stroke-width="4" stroke-linejoin="round" stroke-linecap="round" points="264.6,203.0 295.9,240.5 327.1,253.0 358.3,240.5 389.6,265.5"/><polyline fill="none" stroke="#37a2da" stroke-width="4" stroke-linejoin="round" stroke-linecap="round" points="608.2,203.0 639.5,240.5 670.7,253.0 701.9,240.5"/><polyline fill="none" stroke="#37a2da" stroke-width="4" stroke-linejoin="round" stroke-linecap="round" points="889.3,178.0 920.6,240.5 951.8,240.5 983.0,253.0 1014.3,240.5"/><g fill="#37a2da"><circle cx="77.2" cy="240.5" r="4"/><circle cx="108.5" cy="90.4" r="4"/><circle cx="264.6" cy="203.0" r="4"/><circle cx="295.9" cy="240.5" r="4"/><circle cx="327.1" cy="253.0" r="4"/><circle cx="358.3" cy="240.5" r="4"/><circle cx="389.6" cy="265.5" r="4"/><circle cx="608.2" cy="203.0" r="4"/><circle cx="639.5" cy="240.5" r="4"/><circle cx="670.7" cy="253.0" r="4"/><circle cx="701.9" cy="240.5" r="4"/><circle cx="889.3" cy="178.0" r="4"/><circle cx="920.6" cy="240.5" r="4"/><circle cx="951.8" cy="240.5" r="4"/><circle cx="983.0" cy="253.0" r="4"/><circle cx="1014.3" cy="240.5" r="4"/></g></svg></div>
<div class="w" style="left:480.00px;top:1826px;width:1070.00px;height:420px"><div class="hd"></div><div class="tt">Service Instances Load (calls / min)</div><svg class="abs" style="left:1037.5px;top:16px" width="8" height="30" viewBox="0 0 8 30"><g fill="#858585"><circle cx="4" cy="3.500" r="3"/><circle cx="4" cy="14.100" r="3"/><circle cx="4" cy="24.600" r="3"/></g></svg><svg class="abs" style="left:996.5px;top:17px" width="26" height="26" viewBox="0 0 26 26"><circle cx="13" cy="13" r="10.400" fill="none" stroke="#1e3048" stroke-width="2.300"/><rect x="11.800" y="11.800" width="2.400" height="6.900" fill="#1e3048"/><circle cx="13" cy="8.200" r="1.300" fill="#1e3048"/></svg></div>
<div class="w" style="left:1570.00px;top:1826px;width:1070.00px;height:420px"><div class="hd"></div><div class="tt">Slow Service Instance (ms)</div><svg class="abs" style="left:1037.5px;top:16px" width="8" height="30" viewBox="0 0 8 30"><g fill="#858585"><circle cx="4" cy="3.500" r="3"/><circle cx="4" cy="14.100" r="3"/><circle cx="4" cy="24.600" r="3"/></g></svg></div>
<div class="w" style="left:2662.00px;top:1826px;width:1070.00px;height:420px"><div class="hd"></div><div class="tt">Service Instance Success Rate (%)</div><svg class="abs" style="left:1037.5px;top:16px" width="8" height="30" viewBox="0 0 8 30"><g fill="#858585"><circle cx="4" cy="3.500" r="3"/><circle cx="4" cy="14.100" r="3"/><circle cx="4" cy="24.600" r="3"/></g></svg></div>
<div class="abs" style="left:0;top:1857px;width:3805px;height:3px;background:#1b1b1b"></div><div class="abs" style="left:392px;top:1857px;width:96px;height:3px;background:#5c5c5c"></div>
</body></html>
